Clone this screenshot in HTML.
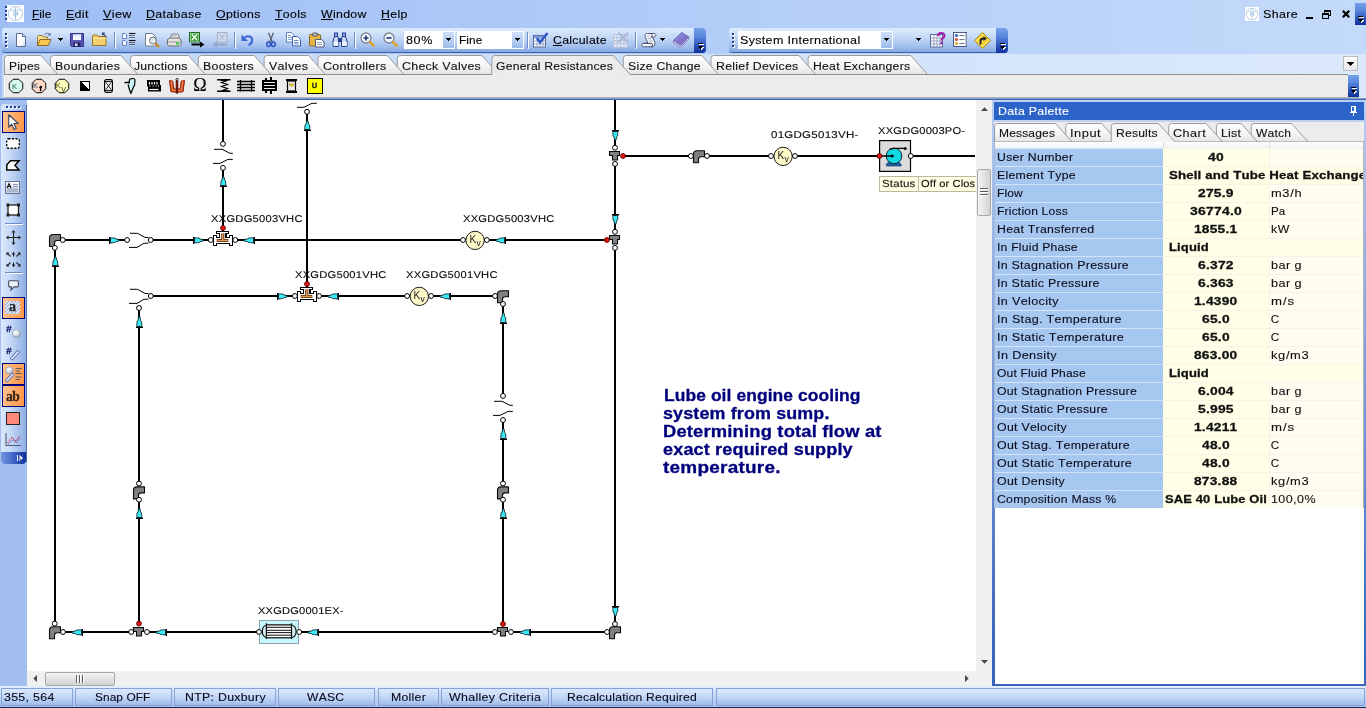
<!DOCTYPE html>
<html lang="en"><head><meta charset="utf-8"><title>Pipe Flow - Data Palette</title>
<style>
html,body{margin:0;padding:0}
body{width:1366px;height:708px;overflow:hidden;position:relative;background:#a3bff0;font-family:"Liberation Sans",sans-serif;font-size:12px}
.a{position:absolute;display:block}
.t{position:absolute;white-space:pre;font-kerning:none;transform-origin:0 0;-webkit-text-stroke:.12px currentColor;font-family:"Liberation Sans",sans-serif}
u{text-decoration:underline;text-underline-offset:1px}
svg{overflow:visible}
#app{position:absolute;left:0;top:0;width:1366px;height:708px;overflow:hidden;will-change:transform}
</style></head>
<body>
<div id="app">
<div class="a" style="left:0;top:0;width:1366px;height:54px;background:linear-gradient(90deg,#9ebef5,#c4dafa)"></div><i class="a" style="left:6px;top:7px;width:2px;height:2px;background:#fff"></i><i class="a" style="left:5px;top:6px;width:2px;height:2px;background:#27418f"></i><i class="a" style="left:6px;top:11px;width:2px;height:2px;background:#fff"></i><i class="a" style="left:5px;top:10px;width:2px;height:2px;background:#27418f"></i><i class="a" style="left:6px;top:15px;width:2px;height:2px;background:#fff"></i><i class="a" style="left:5px;top:14px;width:2px;height:2px;background:#27418f"></i><i class="a" style="left:6px;top:19px;width:2px;height:2px;background:#fff"></i><i class="a" style="left:5px;top:18px;width:2px;height:2px;background:#27418f"></i><svg class="a" style="left:7px;top:5px" width="17" height="17" viewBox="0 0 17 17"><rect width="17" height="17" fill="#fff"/><circle cx="8.5" cy="8.5" r="7" fill="none" stroke="#a9c6e4" stroke-width="1"/><path d="M8.5 2.5v12M4 6.2c0-2 3-2 3 0v5M13 6.2c0-2-3-2-3 0v5M9 8.5h3" fill="none" stroke="#9dbfe0" stroke-width="1"/></svg><span class="t" style="left:31.84px;top:6.00px;font-size:11.7px;line-height:15px;color:#000;letter-spacing:0.067px;transform:scaleX(1.0143);"><u>F</u>ile</span><span class="t" style="left:66.31px;top:6.00px;font-size:11.7px;line-height:15px;color:#000;letter-spacing:0.303px;transform:scaleX(1.0625);"><u>E</u>dit</span><span class="t" style="left:103.31px;top:6.00px;font-size:11.7px;line-height:15px;color:#000;letter-spacing:0.415px;transform:scaleX(1.0676);"><u>V</u>iew</span><span class="t" style="left:146.31px;top:6.00px;font-size:11.7px;line-height:15px;color:#000;letter-spacing:0.319px;transform:scaleX(1.0593);"><u>D</u>atabase</span><span class="t" style="left:216.31px;top:6.00px;font-size:11.7px;line-height:15px;color:#000;letter-spacing:0.284px;transform:scaleX(1.0565);"><u>O</u>ptions</span><span class="t" style="left:275.31px;top:6.00px;font-size:11.7px;line-height:15px;color:#000;letter-spacing:0.289px;transform:scaleX(1.0545);"><u>T</u>ools</span><span class="t" style="left:321.32px;top:6.00px;font-size:11.7px;line-height:15px;color:#000;letter-spacing:0.319px;transform:scaleX(1.0508);"><u>W</u>indow</span><span class="t" style="left:381.31px;top:6.00px;font-size:11.7px;line-height:15px;color:#000;letter-spacing:0.318px;transform:scaleX(1.0541);"><u>H</u>elp</span><svg class="a" style="left:1245px;top:7px" width="14" height="14" viewBox="0 0 17 17"><rect width="17" height="17" fill="#fff"/><circle cx="8.5" cy="8.5" r="7" fill="none" stroke="#a9c6e4" stroke-width="1"/><path d="M8.5 2.5v12M4 6.2c0-2 3-2 3 0v5M13 6.2c0-2-3-2-3 0v5M9 8.5h3" fill="none" stroke="#9dbfe0" stroke-width="1"/></svg><span class="t" style="left:1263.31px;top:6.00px;font-size:11.7px;line-height:15px;color:#000;letter-spacing:0.370px;transform:scaleX(1.0643);">Share</span><i class="a" style="left:1306px;top:17px;width:7px;height:2px;background:#000"></i><svg class="a" style="left:1322px;top:10px" width="10" height="10" shape-rendering="crispEdges"><rect x="2.5" y="0.5" width="6" height="5" fill="none" stroke="#000"/><rect x="2" y="0" width="7" height="2" fill="#000"/><rect x="0.5" y="3.5" width="6" height="5" fill="#b9d2f8" stroke="#000"/><rect x="0" y="3" width="7" height="2" fill="#000"/></svg><svg class="a" style="left:1342px;top:10px" width="8" height="8"><path d="M.8 .8l6.400 6.400M7.200 .8l-6.400 6.400" stroke="#000" stroke-width="2.300"/></svg><div class="a" style="left:1355px;top:3px;width:11px;height:22px;border-radius:0;background:linear-gradient(#74a0ea,#5a86de 35%,#2c55bc 70%,#10309a)"><svg class="a" style="right:1px;bottom:1px" width="7" height="8" shape-rendering="crispEdges"><rect x="1" y="1" width="5" height="1" fill="#fff"/><polygon points="1,4 6,4 3.500,7" fill="#fff"/><rect x="0" y="0" width="5" height="1" fill="#000"/><polygon points="0,3 5,3 2.500,6" fill="#000"/></svg></div>
<div class="a" style="left:2px;top:28px;width:704px;height:24px;border-radius:3px 4px 4px 3px;background:linear-gradient(#dcebfd,#c7dbf8 35%,#a5c1ee 75%,#84a8e2);border-bottom:1px solid #3d62a8;"></div><i class="a" style="left:6px;top:34px;width:2px;height:2px;background:#fff"></i><i class="a" style="left:5px;top:33px;width:2px;height:2px;background:#27418f"></i><i class="a" style="left:6px;top:38px;width:2px;height:2px;background:#fff"></i><i class="a" style="left:5px;top:37px;width:2px;height:2px;background:#27418f"></i><i class="a" style="left:6px;top:42px;width:2px;height:2px;background:#fff"></i><i class="a" style="left:5px;top:41px;width:2px;height:2px;background:#27418f"></i><i class="a" style="left:6px;top:46px;width:2px;height:2px;background:#fff"></i><i class="a" style="left:5px;top:45px;width:2px;height:2px;background:#27418f"></i><svg class="a" style="left:13px;top:32px" width="16" height="16" viewBox="0 0 16 16"><defs><linearGradient id="gpg" x1="0" y1="0" x2="1" y2="1"><stop offset="0" stop-color="#fff"/><stop offset=".6" stop-color="#fff"/><stop offset="1" stop-color="#c8d4ec"/></linearGradient></defs><path d="M3.5 1.5h6l3 3v10h-9z" fill="url(#gpg)" stroke="#5a6d98"/><path d="M9.5 1.5v3h3" fill="#dfe7f7" stroke="#5a6d98"/></svg><svg class="a" style="left:36px;top:32px" width="16" height="16" viewBox="0 0 16 16"><path d="M1.5 13.5v-9l1-1h4l1 1.5h4v2" fill="#f7dc8c" stroke="#9c7a2c"/><path d="M1.5 13.5l2.5-6h11l-2.8 6z" fill="#f6c850" stroke="#8a6a20"/><path d="M8.5 2.5c2-2 4.500-1.500 5.500 .5" fill="none" stroke="#5670a8"/><path d="M14.800 .8l-.3 3.200-2.800-1z" fill="#5670a8"/></svg><svg class="a" style="left:69px;top:32px" width="16" height="16" viewBox="0 0 16 16"><path d="M1.500 1.500h13v13h-12l-1-1z" fill="#5a57b8" stroke="#34318a"/><rect x="4" y="2" width="8" height="6" fill="#f4f6ff"/><rect x="4" y="2" width="8" height="1.500" fill="#c9cff0"/><rect x="4.500" y="10.500" width="7" height="4" fill="#23215c"/><rect x="6" y="11.500" width="2.500" height="2.500" fill="#e8e8f8"/></svg><svg class="a" style="left:92px;top:32px" width="16" height="16" viewBox="0 0 16 16"><path d="M.5 13.500v-9.500l1-1h4l1 1.500h7.500v9z" fill="#f4cf6c" stroke="#94742a"/><path d="M1 6.500h13" stroke="#fbe9ac"/><path d="M10.500 3.500v-2.500h2.5M10.700 1.200l3.600 3.600" fill="none" stroke="#3a4a78" stroke-width="1.100"/></svg><svg class="a" style="left:121px;top:32px" width="16" height="16" viewBox="0 0 16 16"><path d="M1.500 1.500h2.500l1.500 1.500v3.500h-4zM1.500 8.500h2.500l1.500 1.500v3.500h-4z" fill="#fff" stroke="#5f86cc"/><path d="M8 1.500h6.500" stroke="#111" stroke-width="1.100"/><path d="M8 3.500h6M8 5.500h6" stroke="#4a5058" stroke-width=".8"/><path d="M8 8.500h6.500" stroke="#111" stroke-width="1.100"/><path d="M8 10.500h6M8 12.500h6" stroke="#4a5058" stroke-width=".8"/></svg><svg class="a" style="left:144px;top:32px" width="16" height="16" viewBox="0 0 16 16"><path d="M1.500 1.500h7l3 3v9.500h-10z" fill="#fff" stroke="#707a90"/><circle cx="9" cy="8.500" r="3.500" fill="#dce8f4" fill-opacity=".85" stroke="#6a6a6a"/><path d="M11.500 11.500l3 3" stroke="#d08a28" stroke-width="2.400" stroke-linecap="round"/></svg><svg class="a" style="left:166px;top:32px" width="16" height="16" viewBox="0 0 16 16"><path d="M4 6.500l2-4.500h6l1.500 4.500z" fill="#fff" stroke="#7a7a7a"/><path d="M1.500 7.500l2.500-1.500h9l2 1.500v5l-1.500 1.500h-10.500l-1.500-1.500z" fill="#e4e4e4" stroke="#6a6a6a"/><path d="M2 10h12.500" stroke="#9a9a9a"/><rect x="10" y="10.500" width="3" height="2" fill="#34c840"/><path d="M6 3.500h5M5.500 5h6" stroke="#aaa" stroke-width=".8"/></svg><svg class="a" style="left:189px;top:32px" width="16" height="16" viewBox="0 0 16 16"><rect x=".5" y=".5" width="10" height="9.500" fill="#e9f4e4" stroke="#1d6b22"/><rect x="1.500" y="1.500" width="8" height="7.500" fill="#3c9a3c"/><path d="M3 2.500l5 5.500M8 2.500l-5 5.500" stroke="#e8ffe8" stroke-width="1.600"/><path d="M2.500 12.500h10" stroke="#000" stroke-width="2"/><path d="M11 9.500l4.500 3-4.500 3z" fill="#000"/></svg><svg class="a" style="left:212px;top:32px" width="16" height="16" viewBox="0 0 16 16"><rect x="5.500" y=".5" width="9.500" height="9.500" fill="#d3dcec" stroke="#a3b0c8"/><path d="M7.500 2.500l5 5.500M12.500 2.500l-5 5.500" stroke="#b4c0d6" stroke-width="1.400"/><path d="M4 12.500h11" stroke="#93a6c8" stroke-width="2"/><path d="M5 9.500l-4.500 3 4.500 3z" fill="#93a6c8"/></svg><svg class="a" style="left:240px;top:32px" width="16" height="16" viewBox="0 0 16 16"><path d="M3.500 6.500c3.500-3.800 9.500-2.500 8.500 2.800-.4 2-1.800 3.200-3.500 3.800" fill="none" stroke="#3b66d6" stroke-width="2.100"/><path d="M1.500 2.500v6.500h6.500z" fill="#3b66d6"/></svg><svg class="a" style="left:263px;top:32px" width="16" height="16" viewBox="0 0 16 16"><path d="M5.500 .8l3.800 9.200M10.500 .8l-3.800 9.200" stroke="#5c6474" stroke-width="1.400"/><ellipse cx="5.600" cy="12.300" rx="1.900" ry="2.300" fill="none" stroke="#2c50c8" stroke-width="1.500"/><ellipse cx="10.400" cy="12.300" rx="1.900" ry="2.300" fill="none" stroke="#2c50c8" stroke-width="1.500"/></svg><svg class="a" style="left:286px;top:32px" width="16" height="16" viewBox="0 0 16 16"><path d="M.5 .5h5l2.500 2.500v7h-7.500z" fill="#fff" stroke="#5f86cc"/><path d="M2 3.500h3M2 5.500h4.500M2 7.500h4.500" stroke="#7b9bd6" stroke-width=".9"/><path d="M6.500 4.500h5l3 3v6.500h-8z" fill="#fff" stroke="#3c62b6"/><path d="M8 8.500h4.500M8 10.500h4.500M8 12h4.500" stroke="#5a7ecb" stroke-width=".9"/></svg><svg class="a" style="left:309px;top:32px" width="16" height="16" viewBox="0 0 16 16"><rect x=".5" y="2.500" width="11" height="11.500" rx="1" fill="#e6b548" stroke="#8a6414"/><rect x="3.500" y="1" width="5" height="3" rx="1" fill="#b9bdc8" stroke="#555"/><path d="M6.500 7.500h6l2.500 2.500v5h-8.500z" fill="#fff" stroke="#50597a"/><path d="M8 10.500h5M8 12.500h5" stroke="#8a93ad" stroke-width=".9"/></svg><svg class="a" style="left:332px;top:32px" width="16" height="16" viewBox="0 0 16 16"><path d="M1 14.500v-5.500l1.500-4.500h3.500l.5 4.500v5.500zM9.500 14.500v-5.500l.5-4.500h3.500l1.500 4.500v5.500z" fill="#cfdcf4" stroke="#24408c"/><rect x="2.500" y="1" width="3" height="3.500" fill="#8aa5dc" stroke="#24408c"/><rect x="10.500" y="1" width="3" height="3.500" fill="#8aa5dc" stroke="#24408c"/><rect x="6.500" y="6" width="3" height="4" fill="#24408c"/><rect x="1.500" y="10" width="5" height="4" fill="#fff" opacity=".7"/><rect x="10" y="10" width="5" height="4" fill="#fff" opacity=".7"/></svg><svg class="a" style="left:360px;top:32px" width="16" height="16" viewBox="0 0 16 16"><circle cx="6" cy="6" r="5" fill="#f2f6fc" stroke="#7b8594" stroke-width="1.300"/><path d="M3.500 6h5M6 3.500v5" stroke="#223a78" stroke-width="1.700"/><path d="M10.200 10.200l3.300 3.300" stroke="#d6a63c" stroke-width="3" stroke-linecap="round"/></svg><svg class="a" style="left:383px;top:32px" width="16" height="16" viewBox="0 0 16 16"><circle cx="6" cy="6" r="5" fill="#f2f6fc" stroke="#7b8594" stroke-width="1.300"/><path d="M3.500 6h5" stroke="#223a78" stroke-width="1.700"/><path d="M10.200 10.200l3.300 3.300" stroke="#d6a63c" stroke-width="3" stroke-linecap="round"/></svg><svg class="a" style="left:533px;top:32px" width="16" height="16" viewBox="0 0 16 16"><rect x=".5" y="3.500" width="12" height="11.500" fill="#fff" stroke="#5a6c9c"/><rect x="1" y="4" width="11" height="2.500" fill="#7f9fdc"/><path d="M1 9h11M1 12h11M4 6.500v8M7 6.500v8M10 6.500v8" stroke="#8e9cc0" stroke-width=".9"/><path d="M4 6l3 4.500 7.500-9.500" fill="none" stroke="#2b56c8" stroke-width="2.400"/></svg><svg class="a" style="left:613px;top:32px" width="16" height="16" viewBox="0 0 16 16"><rect x=".5" y="2.500" width="14" height="13" fill="#dfe7f5" stroke="#b3c1dc"/><path d="M1 5.500h13M1 8.500h13M1 11.500h13M4 3v12M7.500 3v12M11 3v12" stroke="#b6c4de" stroke-width="1.100"/><path d="M5.500 .8l9.500 9.500M15 .8l-9.500 9.500" stroke="#aab8d4" stroke-width="2"/></svg><svg class="a" style="left:641px;top:32px" width="16" height="16" viewBox="0 0 16 16"><path d="M4 3.800C4 1.800 5 1.500 6.200 1.500H13.200C15.400 1.500 15.400 5 13.200 5H11.600C12.400 7.800 14.200 9.800 14 12.300C13.800 14.300 12.200 14.800 10.500 14.800H2.600C.4 14.800 .4 11.300 2.600 11.300H6.600C6.800 8.800 4 6.500 4 3.800Z" fill="#f6f7fd" stroke="#465070" stroke-width=".95"/><path d="M2.600 11.300H10.200C12 11.300 12 14.800 10.200 14.800" fill="none" stroke="#38425e" stroke-width="1"/><path d="M11.600 5H9.800C11.600 4.800 11.800 1.700 9.800 1.500" fill="none" stroke="#38425e" stroke-width=".9"/><path d="M6.300 4H8.800M6.800 6.500H10M8 9H11.400" stroke="#9aa4c4" stroke-width=".9"/></svg><svg class="a" style="left:673px;top:32px" width="16" height="16" viewBox="0 0 16 16"><defs><linearGradient id="gbk" x1="0" y1="0" x2="1" y2="1"><stop offset="0" stop-color="#9c92e0"/><stop offset="1" stop-color="#6a5fc0"/></linearGradient></defs><path d="M.5 8.500v2.300l7.300 4.700 8-8.500v-2.300" fill="#f2f2fa" stroke="#8a82c4"/><path d="M.5 8.500l8.300-8 7 4.500-8 8.500z" fill="url(#gbk)" stroke="#6a62b0"/><path d="M1.500 10.300l6.300 4 7.500-8" fill="none" stroke="#b8b4dc" stroke-width=".8"/></svg><svg class="a" style="left:58px;top:38px" width="5" height="3" shape-rendering="crispEdges"><polygon points="0,0 5,0 2.5,3" fill="#000"/></svg><i class="a" style="left:114px;top:32px;width:1px;height:16px;background:#6a8ccb"></i><i class="a" style="left:115px;top:33px;width:1px;height:16px;background:#fff"></i><i class="a" style="left:234px;top:32px;width:1px;height:16px;background:#6a8ccb"></i><i class="a" style="left:235px;top:33px;width:1px;height:16px;background:#fff"></i><i class="a" style="left:354px;top:32px;width:1px;height:16px;background:#6a8ccb"></i><i class="a" style="left:355px;top:33px;width:1px;height:16px;background:#fff"></i><i class="a" style="left:527px;top:32px;width:1px;height:16px;background:#6a8ccb"></i><i class="a" style="left:528px;top:33px;width:1px;height:16px;background:#fff"></i><i class="a" style="left:635px;top:32px;width:1px;height:16px;background:#6a8ccb"></i><i class="a" style="left:636px;top:33px;width:1px;height:16px;background:#fff"></i><div class="a" style="left:404px;top:31px;width:51px;height:18px;background:#fff"></div><div class="a" style="left:443px;top:32px;width:11px;height:16px;background:linear-gradient(#cfe0fa,#9dbcec)"></div><svg class="a" style="left:446px;top:38px" width="5" height="3" shape-rendering="crispEdges"><polygon points="0,0 5,0 2.5,3" fill="#000"/></svg><span class="t" style="left:405.70px;top:32.00px;font-size:11.7px;line-height:15px;color:#000;letter-spacing:0.588px;transform:scaleX(1.0695);">80%</span><div class="a" style="left:457px;top:31px;width:67px;height:18px;background:#fff"></div><div class="a" style="left:512px;top:32px;width:11px;height:16px;background:linear-gradient(#cfe0fa,#9dbcec)"></div><svg class="a" style="left:515px;top:38px" width="5" height="3" shape-rendering="crispEdges"><polygon points="0,0 5,0 2.5,3" fill="#000"/></svg><span class="t" style="left:458.84px;top:32.00px;font-size:11.7px;line-height:15px;color:#000;letter-spacing:0.081px;transform:scaleX(1.0141);">Fine</span><span class="t" style="left:552.81px;top:32.00px;font-size:11.7px;line-height:15px;color:#000;letter-spacing:0.253px;transform:scaleX(1.0551);"><u>C</u>alculate</span><svg class="a" style="left:660px;top:38px" width="5" height="3" shape-rendering="crispEdges"><polygon points="0,0 5,0 2.5,3" fill="#000"/></svg><div class="a" style="left:694px;top:28px;width:12px;height:25px;border-radius:0 4px 4px 0;background:linear-gradient(#74a0ea,#5a86de 35%,#2c55bc 70%,#10309a)"><svg class="a" style="right:1px;bottom:2px" width="7" height="8" shape-rendering="crispEdges"><rect x="1" y="1" width="5" height="1" fill="#fff"/><polygon points="1,4 6,4 3.500,7" fill="#fff"/><rect x="0" y="0" width="5" height="1" fill="#000"/><polygon points="0,3 5,3 2.500,6" fill="#000"/></svg></div>
<div class="a" style="left:729px;top:28px;width:279px;height:24px;border-radius:3px 4px 4px 3px;background:linear-gradient(#dcebfd,#c7dbf8 35%,#a5c1ee 75%,#84a8e2);border-bottom:1px solid #3d62a8;"></div><i class="a" style="left:733px;top:34px;width:2px;height:2px;background:#fff"></i><i class="a" style="left:732px;top:33px;width:2px;height:2px;background:#27418f"></i><i class="a" style="left:733px;top:38px;width:2px;height:2px;background:#fff"></i><i class="a" style="left:732px;top:37px;width:2px;height:2px;background:#27418f"></i><i class="a" style="left:733px;top:42px;width:2px;height:2px;background:#fff"></i><i class="a" style="left:732px;top:41px;width:2px;height:2px;background:#27418f"></i><i class="a" style="left:733px;top:46px;width:2px;height:2px;background:#fff"></i><i class="a" style="left:732px;top:45px;width:2px;height:2px;background:#27418f"></i><div class="a" style="left:738px;top:31px;width:155px;height:18px;background:#fff"></div><div class="a" style="left:881px;top:32px;width:11px;height:16px;background:linear-gradient(#cfe0fa,#9dbcec)"></div><svg class="a" style="left:884px;top:38px" width="5" height="3" shape-rendering="crispEdges"><polygon points="0,0 5,0 2.5,3" fill="#000"/></svg><span class="t" style="left:739.80px;top:32.00px;font-size:11.7px;line-height:15px;color:#000;letter-spacing:0.300px;transform:scaleX(1.0708);">System International</span><svg class="a" style="left:916px;top:38px" width="5" height="3" shape-rendering="crispEdges"><polygon points="0,0 5,0 2.5,3" fill="#000"/></svg><svg class="a" style="left:929.5px;top:32px" width="16" height="16" viewBox="0 0 16 16"><rect x=".5" y="2.500" width="12" height="12.500" fill="#fff" stroke="#5a6c9c"/><path d="M1 6h11M1 9h11M1 12h11M4 3v12M7 3v12M10 3v12" stroke="#8e9cc0" stroke-width=".9"/><path d="M8 4c0-4 7-4 6.500 0-.3 2-3 2-3 4.500" fill="none" stroke="#a020b0" stroke-width="2.200"/><circle cx="11.500" cy="11" r="1.300" fill="#a020b0"/></svg><svg class="a" style="left:953px;top:32px" width="16" height="16" viewBox="0 0 16 16"><rect x=".5" y=".5" width="13" height="14" fill="#fdfdfd" stroke="#4a5a8a"/><rect x="12" y="1" width="1.500" height="13" fill="#c4ccdf"/><circle cx="3.500" cy="3.500" r="1.600" fill="#3860d8"/><circle cx="3.500" cy="7.500" r="1.600" fill="#d84a30"/><circle cx="3.500" cy="11.500" r="1.600" fill="#e0b020"/><path d="M6.500 3.500h5M6.500 7.500h5M6.500 11.500h5" stroke="#6a7a9a" stroke-width="1"/></svg><svg class="a" style="left:974px;top:31.5px" width="17" height="17" viewBox="0 0 17 17"><path d="M8.500 .5l8 8-8 8-8-8z" fill="#f6d43c" stroke="#b08a10"/><path d="M8.500 2.500l6 6-6 6-6-6z" fill="none" stroke="#fbe98a" stroke-width=".8"/><path d="M6.500 12.500v-3.500c0-2 1.500-2.500 3.500-2.500" fill="none" stroke="#222" stroke-width="1.800"/><path d="M9.500 4l3.500 2.500-3.500 2.500z" fill="#222"/></svg><div class="a" style="left:996px;top:28px;width:12px;height:25px;border-radius:0 4px 4px 0;background:linear-gradient(#74a0ea,#5a86de 35%,#2c55bc 70%,#10309a)"><svg class="a" style="right:1px;bottom:2px" width="7" height="8" shape-rendering="crispEdges"><rect x="1" y="1" width="5" height="1" fill="#fff"/><polygon points="1,4 6,4 3.500,7" fill="#fff"/><rect x="0" y="0" width="5" height="1" fill="#000"/><polygon points="0,3 5,3 2.500,6" fill="#000"/></svg></div>
<div class="a" style="left:0;top:53px;width:1366px;height:47px;background:linear-gradient(90deg,#9ebef5,#c4dafa)"></div><div class="a" style="left:2px;top:54px;width:1364px;height:45px;border-radius:3px 0 0 3px;background:linear-gradient(90deg,#c3d9f9,#dce9fb)"></div><div class="a" style="left:4px;top:74px;width:1344px;height:23px;background:#ececec;border-left:1px solid #fff"></div><svg class="a" style="left:0;top:54px" width="1366" height="21" viewBox="0 54 1366 21"><defs><linearGradient id="tg1" x1="0" y1="0" x2="0" y2="1"><stop offset="0" stop-color="#fff"/><stop offset=".5" stop-color="#f6f6f6"/><stop offset="1" stop-color="#e4e4e4"/></linearGradient></defs><path d="M808.1 74.5V58.5Q808.1 55.5 811.1 55.5H910.8L927.6 74.5Z" fill="url(#tg1)"/><path d="M808.1 74.5V58.5Q808.1 55.5 811.1 55.5H910.8L927.6 74.5" fill="none" stroke="#9a9a9a" stroke-width="1"/><path d="M711 74.5V58.5Q711 55.5 714 55.5H798.9L815.7 74.5Z" fill="url(#tg1)"/><path d="M711 74.5V58.5Q711 55.5 714 55.5H798.9L815.7 74.5" fill="none" stroke="#9a9a9a" stroke-width="1"/><path d="M623.3 74.5V58.5Q623.3 55.5 626.3 55.5H701.8L718.6 74.5Z" fill="url(#tg1)"/><path d="M623.3 74.5V58.5Q623.3 55.5 626.3 55.5H701.8L718.6 74.5" fill="none" stroke="#9a9a9a" stroke-width="1"/><path d="M397.3 74.5V58.5Q397.3 55.5 400.3 55.5H481.9L498.7 74.5Z" fill="url(#tg1)"/><path d="M397.3 74.5V58.5Q397.3 55.5 400.3 55.5H481.9L498.7 74.5" fill="none" stroke="#9a9a9a" stroke-width="1"/><path d="M318 74.5V58.5Q318 55.5 321 55.5H387.2L404 74.5Z" fill="url(#tg1)"/><path d="M318 74.5V58.5Q318 55.5 321 55.5H387.2L404 74.5" fill="none" stroke="#9a9a9a" stroke-width="1"/><path d="M264.1 74.5V58.5Q264.1 55.5 267.1 55.5H308.6L325.4 74.5Z" fill="url(#tg1)"/><path d="M264.1 74.5V58.5Q264.1 55.5 267.1 55.5H308.6L325.4 74.5" fill="none" stroke="#9a9a9a" stroke-width="1"/><path d="M198.3 74.5V58.5Q198.3 55.5 201.3 55.5H254.2L271 74.5Z" fill="url(#tg1)"/><path d="M198.3 74.5V58.5Q198.3 55.5 201.3 55.5H254.2L271 74.5" fill="none" stroke="#9a9a9a" stroke-width="1"/><path d="M130.5 74.5V58.5Q130.5 55.5 133.5 55.5H188.5L205.3 74.5Z" fill="url(#tg1)"/><path d="M130.5 74.5V58.5Q130.5 55.5 133.5 55.5H188.5L205.3 74.5" fill="none" stroke="#9a9a9a" stroke-width="1"/><path d="M50.5 74.5V58.5Q50.5 55.5 53.5 55.5H121L137.8 74.5Z" fill="url(#tg1)"/><path d="M50.5 74.5V58.5Q50.5 55.5 53.5 55.5H121L137.8 74.5" fill="none" stroke="#9a9a9a" stroke-width="1"/><path d="M4.5 74.5V58.5Q4.5 55.5 7.5 55.5H41L57.8 74.5Z" fill="url(#tg1)"/><path d="M4.5 74.5V58.5Q4.5 55.5 7.5 55.5H41L57.8 74.5" fill="none" stroke="#9a9a9a" stroke-width="1"/><path d="M491.8 74.5V58.5Q491.8 55.5 494.8 55.5H613.3L630.1 74.5Z" fill="#ececec"/><path d="M491.8 74.5V58.5Q491.8 55.5 494.8 55.5H613.3L630.1 74.5" fill="none" stroke="#9a9a9a" stroke-width="1"/><path d="M4 74.5H491.8M630.1 74.5H1348" stroke="#8e8e8e" stroke-width="1"/></svg><span class="t" style="left:8.83px;top:58.00px;font-size:11.7px;line-height:15px;color:#111;letter-spacing:0.169px;transform:scaleX(1.0305);">Pipes</span><span class="t" style="left:54.82px;top:58.00px;font-size:11.7px;line-height:15px;color:#111;letter-spacing:0.269px;transform:scaleX(1.0538);">Boundaries</span><span class="t" style="left:134.32px;top:58.00px;font-size:11.7px;line-height:15px;color:#111;letter-spacing:0.210px;transform:scaleX(1.0447);">Junctions</span><span class="t" style="left:202.71px;top:58.00px;font-size:11.7px;line-height:15px;color:#111;letter-spacing:0.278px;transform:scaleX(1.0561);">Boosters</span><span class="t" style="left:268.71px;top:58.00px;font-size:11.7px;line-height:15px;color:#111;letter-spacing:0.323px;transform:scaleX(1.0619);">Valves</span><span class="t" style="left:323.11px;top:58.00px;font-size:11.7px;line-height:15px;color:#111;letter-spacing:0.282px;transform:scaleX(1.0666);">Controllers</span><span class="t" style="left:401.81px;top:58.00px;font-size:11.7px;line-height:15px;color:#111;letter-spacing:0.280px;transform:scaleX(1.0567);">Check Valves</span><span class="t" style="left:495.62px;top:58.00px;font-size:11.7px;line-height:15px;color:#111;letter-spacing:0.197px;transform:scaleX(1.0421);">General Resistances</span><span class="t" style="left:627.92px;top:58.00px;font-size:11.7px;line-height:15px;color:#111;letter-spacing:0.243px;transform:scaleX(1.0474);">Size Change</span><span class="t" style="left:715.61px;top:58.00px;font-size:11.7px;line-height:15px;color:#111;letter-spacing:0.246px;transform:scaleX(1.0562);">Relief Devices</span><span class="t" style="left:812.72px;top:58.00px;font-size:11.7px;line-height:15px;color:#111;letter-spacing:0.226px;transform:scaleX(1.0457);">Heat Exchangers</span><div class="a" style="left:4px;top:97px;width:1355px;height:1px;background:#b2b2b6"></div><div class="a" style="left:0;top:98px;width:1366px;height:1px;background:#7d9cd4"></div><div class="a" style="left:0;top:99px;width:1366px;height:1px;background:#4068b0"></div><div class="a" style="left:1343px;top:56px;width:15px;height:15px;background:linear-gradient(#fff,#e8e8e8);border:1px solid #bdbdbd;box-sizing:border-box"></div><svg class="a" style="left:1347px;top:62px" width="7" height="4" shape-rendering="crispEdges"><polygon points="0,0 7,0 3.5,4" fill="#000"/></svg><div class="a" style="left:1348px;top:75px;width:11px;height:22px;border-radius:0;background:linear-gradient(#74a0ea,#5a86de 35%,#2c55bc 70%,#10309a)"><svg class="a" style="right:1px;bottom:2px" width="7" height="8" shape-rendering="crispEdges"><rect x="1" y="1" width="5" height="1" fill="#fff"/><polygon points="1,4 6,4 3.500,7" fill="#fff"/><rect x="0" y="0" width="5" height="1" fill="#000"/><polygon points="0,3 5,3 2.500,6" fill="#000"/></svg></div>
<svg class="a" style="left:8px;top:78px" width="16" height="16" viewBox="0 0 16 16" ><polygon points="14.74,10.79 10.79,14.74 5.21,14.74 1.26,10.79 1.26,5.21 5.21,1.26 10.79,1.26 14.74,5.21" fill="#d6fbee" stroke="#000" stroke-width="1" stroke-linejoin="round"/></svg><span class="t" style="left:12.05px;top:81.00px;font-size:7.5px;line-height:11px;color:#3c7a68;">K</span><svg class="a" style="left:31px;top:78px" width="16" height="16" viewBox="0 0 16 16" ><polygon points="14.74,10.79 10.79,14.74 5.21,14.74 1.26,10.79 1.26,5.21 5.21,1.26 10.79,1.26 14.74,5.21" fill="#ffd9c6" stroke="#000" stroke-width="1" stroke-linejoin="round"/></svg><span class="t" style="left:33.05px;top:80.00px;font-size:7.5px;line-height:11px;color:#3c5884;">K</span><span class="t" style="left:39.35px;top:83.00px;font-size:8px;line-height:11px;color:#000;font-weight:bold;-webkit-text-stroke:.3px currentColor;">f</span><svg class="a" style="left:54px;top:78px" width="16" height="16" viewBox="0 0 16 16" ><polygon points="14.74,10.79 10.79,14.74 5.21,14.74 1.26,10.79 1.26,5.21 5.21,1.26 10.79,1.26 14.74,5.21" fill="#fbfbbe" stroke="#000" stroke-width="1" stroke-linejoin="round"/></svg><span class="t" style="left:55.75px;top:80.00px;font-size:7.5px;line-height:11px;color:#70702a;">K</span><span class="t" style="left:61.35px;top:85.00px;font-size:7px;line-height:9px;color:#55551a;">V</span><svg class="a" style="left:80px;top:81px" width="10" height="10" viewBox="0 0 10 10" shape-rendering="crispEdges"><rect x=".5" y=".5" width="9" height="9" fill="#fff" stroke="#000"/><path d="M0 0v10h10z" fill="#000"/></svg><svg class="a" style="left:104px;top:79px" width="9" height="14" viewBox="0 0 9 14" ><rect x=".6" y=".6" width="7.800" height="12.800" rx="1.800" fill="#fff" stroke="#000" stroke-width="1.200"/><path d="M1 2.600h7M1 11.400h7" stroke="#000" stroke-width="1"/><path d="M2 3.500l5 7M7 3.500l-5 7" stroke="#000" stroke-width=".9"/></svg><svg class="a" style="left:124px;top:78px" width="12" height="16" viewBox="0 0 12 16" ><path d="M5.800 1.200C7.500 .2 10.800 .2 11 1.800L10.600 7 8.200 12 6.900 15.500 5.600 12 4.200 7z" fill="#c8f1f8" stroke="#000" stroke-width="1.200" stroke-linejoin="round"/><path d="M.6 4.600H6" stroke="#000" stroke-width="1.600"/><path d="M2 5.800H5.500" stroke="#c8f1f8" stroke-width="1"/></svg><svg class="a" style="left:147px;top:80px" width="14" height="12" viewBox="0 0 14 12" ><path d="M0 0h13v5h1v6.500h-13v-5h-1z" fill="#000"/><path d="M2.500 2v2.500M5 2v2.500M7.500 2v2.500M10 2v2.500" stroke="#fff" stroke-width="1.200"/><path d="M2.500 6h1M5.500 6h1M8.500 6h1M11 6h1" stroke="#fff" stroke-width="1"/><path d="M2.500 9.500h9" stroke="#fff" stroke-width="1.200"/></svg><svg class="a" style="left:169px;top:78px" width="16" height="16" viewBox="0 0 16 16" ><path d="M2.300 2.500C1.800 5 3.200 7 3.300 12.500H12.700C12.800 7 14.200 5 13.700 2.500" fill="none" stroke="#7a1c0c" stroke-width="4.200" stroke-linejoin="round"/><path d="M2.300 2.500C1.800 5 3.200 7 3.300 12.500H12.700C12.800 7 14.200 5 13.700 2.500" fill="none" stroke="#cc3c20" stroke-width="2.800" stroke-linejoin="round"/><path d="M2.400 3C2 5.500 3.300 7.500 3.400 12.400H12.600C12.700 7.500 14 5.500 13.600 3" fill="none" stroke="#f0a040" stroke-width="1"/><path d="M8 2.500v13" stroke="#7a1c0c" stroke-width="2.600"/><path d="M8 3v12" stroke="#cc3c20" stroke-width="1.300"/><path d="M8 .5v15" stroke="#200" stroke-width=".9"/><circle cx="8" cy="1.600" r="1.100" fill="#ececec" stroke="#200" stroke-width=".8"/></svg><span class="t" style="left:193.35px;top:74.00px;font-size:18px;line-height:22px;color:#000;font-family:'Liberation Serif';">&#937;</span><svg class="a" style="left:217px;top:79px" width="14" height="13" viewBox="0 0 14 13" ><path d="M0 .8h13.500M0 12.200h13.500" stroke="#000" stroke-width="1.500"/><path d="M3.500 1.500h7l-6 2 6 2-6 2 6 2-6 2.200h7" fill="none" stroke="#000" stroke-width="1.150"/></svg><svg class="a" style="left:237px;top:80px" width="18" height="11" viewBox="0 0 18 11" ><path d="M0 1.500h18M0 4.500h18M0 7.500h18M0 10.500h18" stroke="#000" stroke-width="1.300"/><path d="M3.500 0v11.500M14.500 0v11.500" stroke="#000" stroke-width="1.300"/></svg><svg class="a" style="left:261px;top:77px" width="16" height="17" viewBox="0 0 16 17" shape-rendering="crispEdges"><path d="M1 4h14M1 7h14M1 10h14M1 13h14" stroke="#000" stroke-width="1.500"/><path d="M1.500 3v11M14.500 3v11" stroke="#000" stroke-width="2"/><path d="M5 1v3M10 0v4M5 13v3M10 13v4" stroke="#000" stroke-width="1.300"/></svg><svg class="a" style="left:286px;top:79px" width="11" height="14" viewBox="0 0 11 14" ><rect x="0" y="0" width="11" height="2" fill="#000"/><rect x="0" y="12" width="11" height="2" fill="#000"/><rect x="1.500" y="2" width="8" height="10" fill="#ececec" stroke="#000" stroke-width="1.200"/><path d="M3 5h5l-2.500 3z" fill="#f0d820" stroke="#a08a10" stroke-width=".6"/></svg><div class="a" style="left:307px;top:78px;width:16px;height:16px;box-sizing:border-box;border:1px solid #000;background:#ffff00"></div><span class="t" style="left:311.85px;top:80.00px;font-size:7.5px;line-height:11px;color:#222;font-weight:bold;-webkit-text-stroke:.3px currentColor;">U</span>
<div class="a" style="left:0;top:100px;width:27px;height:587px;background:#a3bff0"></div><div class="a" style="left:26px;top:105px;width:1px;height:357px;background:#4a6cb4"></div><div class="a" style="left:1px;top:104px;width:25px;height:360px;border-radius:3px 3px 4px 4px;background:linear-gradient(90deg,#dbe8fc,#c3d7f7 40%,#8eaee2)"></div><i class="a" style="left:7px;top:107px;width:2px;height:2px;background:#fff"></i><i class="a" style="left:6px;top:106px;width:2px;height:2px;background:#27418f"></i><i class="a" style="left:11px;top:107px;width:2px;height:2px;background:#fff"></i><i class="a" style="left:10px;top:106px;width:2px;height:2px;background:#27418f"></i><i class="a" style="left:15px;top:107px;width:2px;height:2px;background:#fff"></i><i class="a" style="left:14px;top:106px;width:2px;height:2px;background:#27418f"></i><i class="a" style="left:19px;top:107px;width:2px;height:2px;background:#fff"></i><i class="a" style="left:18px;top:106px;width:2px;height:2px;background:#27418f"></i><div class="a" style="left:2px;top:111px;width:23px;height:22px;box-sizing:border-box;border:1px solid #000080;background:linear-gradient(100deg,#ffc594,#ffa760 60%,#ff9544)"></div><svg class="a" style="left:8px;top:114px" width="11" height="17" viewBox="0 0 11 17" ><path d="M.75 .75v12.500l3-3 2.300 5.200 2.200-1-2.300-5h4.200z" fill="#fff" stroke="#33425e" stroke-width="1.100" stroke-linejoin="round"/></svg><svg class="a" style="left:6px;top:138px" width="14" height="11" viewBox="0 0 14 11" ><rect x=".75" y=".75" width="12.500" height="9.500" rx="1.500" fill="#fff" stroke="#000" stroke-width="1.300" stroke-dasharray="2.200 1.400"/></svg><svg class="a" style="left:6px;top:160px" width="14" height="11" viewBox="0 0 14 11" ><path d="M4.500 .75h8.500l-4 4.500 4 4.700h-12.200v-5.200z" fill="#fff" stroke="#000" stroke-width="1.500" stroke-linejoin="miter"/></svg><svg class="a" style="left:5px;top:181px" width="15" height="13" viewBox="0 0 15 13" ><defs><linearGradient id="gti" x1="0" y1="0" x2="0" y2="1"><stop offset="0" stop-color="#fff"/><stop offset="1" stop-color="#c5cfe6"/></linearGradient></defs><rect x=".5" y=".5" width="14" height="12" fill="url(#gti)" stroke="#6a7492"/><path d="M8 3.500h5M8 5.500h5M2 8h11M2 10h11" stroke="#808aa6" stroke-width=".9"/><path d="M2 7l2-4.500 2 4.500M2.800 5.500h2.400" fill="none" stroke="#111" stroke-width="1.100"/></svg><svg class="a" style="left:5.5px;top:203px" width="15" height="14" viewBox="0 0 15 14" ><rect x="2" y="2" width="10.500" height="10" fill="#fff" stroke="#222" stroke-width="1.300"/><rect x=".5" y=".5" width="3" height="3" fill="#222"/><rect x="11" y=".5" width="3" height="3" fill="#222"/><rect x=".5" y="10.500" width="3" height="3" fill="#222"/><rect x="11" y="10.500" width="3" height="3" fill="#222"/></svg><div class="a" style="left:5px;top:223px;width:17px;height:1px;background:#6a8ccb"></div><div class="a" style="left:6px;top:224px;width:17px;height:1px;background:#fff"></div><svg class="a" style="left:6px;top:229.5px" width="15" height="15" viewBox="0 0 15 15" ><path d="M7.500 1v13M1 7.500h13" stroke="#222" stroke-width="1.100"/><path d="M7.500 0l2 2.500h-4zM7.500 15l2-2.500h-4zM0 7.500l2.500-2v4zM15 7.500l-2.500-2v4z" fill="#222"/></svg><svg class="a" style="left:6px;top:251.5px" width="15" height="15" viewBox="0 0 15 15" ><path d="M7.500 0v4.500M7.500 15v-4.500M1 1l3.500 3.500M14 1l-3.500 3.500M1 14l3.500-3.500M14 14l-3.500-3.500" stroke="#222" stroke-width="1.100"/><path d="M7.500 0l1.800 2.500h-3.600zM7.500 15l1.800-2.500h-3.600zM.5 .5h3l-3 3zM14.500 .5h-3l3 3zM.5 14.500h3l-3-3zM14.500 14.500h-3l3-3z" fill="#222"/></svg><div class="a" style="left:5px;top:272px;width:17px;height:1px;background:#6a8ccb"></div><div class="a" style="left:6px;top:273px;width:17px;height:1px;background:#fff"></div><svg class="a" style="left:8px;top:280px" width="11" height="11" viewBox="0 0 11 11" ><path d="M1.500 .75h8c.6 0 .8.300 .8.800v4.500c0 .5-.3.800-.8.800h-3.500l-3 3.200.3-3.200h-1.800c-.5 0-.8-.3-.8-.8v-4.500c0-.5.300-.8.800-.8z" fill="#f2f5fb" stroke="#444c5e" stroke-width="1.100"/></svg><div class="a" style="left:2px;top:297px;width:23px;height:22px;box-sizing:border-box;border:1px solid #000080;background:linear-gradient(100deg,#ffc594,#ffa760 60%,#ff9544)"></div><svg class="a" style="left:5px;top:301px" width="15" height="13" viewBox="0 0 15 13" ><defs><pattern id="hat" width="2.500" height="2.500" patternUnits="userSpaceOnUse" patternTransform="rotate(-45)"><rect width="2.500" height="2.500" fill="#eef2fb"/><rect width="2.500" height="1" fill="#8aa0d0"/></pattern></defs><rect width="15" height="13" fill="url(#hat)"/></svg><span class="t" style="left:9.05px;top:298.00px;font-size:14px;line-height:17px;color:#2a2a2a;font-weight:bold;-webkit-text-stroke:.3px currentColor;font-family:'Liberation Serif';">a</span><span class="t" style="left:6.15px;top:322.00px;font-size:9.5px;line-height:13px;color:#101060;font-weight:bold;-webkit-text-stroke:.3px currentColor;">#</span><svg class="a" style="left:12px;top:328.5px" width="9" height="9" viewBox="0 0 9 9" ><defs><radialGradient id="sph" cx=".35" cy=".3" r=".8"><stop offset="0" stop-color="#fff"/><stop offset=".6" stop-color="#cfd6e2"/><stop offset="1" stop-color="#808a9c"/></radialGradient></defs><circle cx="4.500" cy="4.500" r="4" fill="url(#sph)" stroke="#8a92a2" stroke-width=".6"/></svg><span class="t" style="left:6.15px;top:344.00px;font-size:9.5px;line-height:13px;color:#101060;font-weight:bold;-webkit-text-stroke:.3px currentColor;">#</span><svg class="a" style="left:10px;top:349.5px" width="10" height="10" viewBox="0 0 10 10" ><path d="M2 8.500l6-6.500" stroke="#6072b0" stroke-width="3.600" stroke-linecap="round"/><path d="M2 8.500l6-6.500" stroke="#e6ecfa" stroke-width="1.800" stroke-linecap="round"/></svg><div class="a" style="left:2px;top:363px;width:23px;height:22px;box-sizing:border-box;border:1px solid #000080;background:linear-gradient(100deg,#ffc594,#ffa760 60%,#ff9544)"></div><svg class="a" style="left:5px;top:366px" width="17" height="17" viewBox="0 0 17 17" ><circle cx="4.500" cy="4.500" r="3.700" fill="url(#sph)" stroke="#8a92a2" stroke-width=".6"/><path d="M1.800 14.500l6-6" stroke="#6072b0" stroke-width="3.400" stroke-linecap="round"/><path d="M1.800 14.500l6-6" stroke="#e6ecfa" stroke-width="1.600" stroke-linecap="round"/><path d="M10.500 2.500h6M10.500 5h4.500M10.500 7.500h6M10.500 11h6M10.500 13.500h4.500" stroke="#55586a" stroke-width="1.100"/></svg><div class="a" style="left:2px;top:385px;width:23px;height:22px;box-sizing:border-box;border:1px solid #000080;background:linear-gradient(100deg,#ffc594,#ffa760 60%,#ff9544)"></div><span class="t" style="left:5.82px;top:387.00px;font-size:15px;line-height:18px;color:#3a2414;letter-spacing:-0.433px;transform:scaleX(0.9000);font-weight:bold;-webkit-text-stroke:.3px currentColor;font-family:'Liberation Serif';">ab</span><div class="a" style="left:6px;top:411.500px;width:14px;height:13px;box-sizing:border-box;border:1px solid #222;background:#ff8a7a"></div><svg class="a" style="left:5px;top:433px" width="16" height="14" viewBox="0 0 16 14" ><path d="M1 0v12.500h15" fill="none" stroke="#555e78" stroke-width="1.100"/><path d="M2.500 10l4.500-5.500 4 4 4-6" fill="none" stroke="#d8304a" stroke-width="1.100" stroke-dasharray="1.600 1.200"/><path d="M3 11.500l5-4.500 3.500 3 3.500-5.500" fill="none" stroke="#3c5ccc" stroke-width="1" stroke-dasharray="1.600 1.200"/></svg><div class="a" style="left:1px;top:452px;width:25px;height:12px;border-radius:0 0 4px 4px;background:linear-gradient(90deg,#7797e2,#3a5fc0 55%,#0e3194)"></div><svg class="a" style="left:17px;top:455px" width="7" height="7" viewBox="0 0 7 7" ><rect x="0" y="0" width="1" height="6" fill="#fff"/><path d="M2.500 0v6l3.500-3z" fill="#fff"/><path d="M3.500 2v3.500" stroke="#000" stroke-width=".6" opacity=".4"/></svg>
<div class="a" style="left:27px;top:100px;width:949px;height:571px;background:#fff;overflow:hidden"><svg class="a" style="left:0;top:0" width="949" height="571" viewBox="27 100 949 571"><g shape-rendering="crispEdges"><rect x="222" y="100" width="2" height="42" fill="#000"/><rect x="222" y="170" width="2" height="62" fill="#000"/><rect x="306" y="114" width="2" height="174" fill="#000"/><rect x="614" y="100" width="2" height="46" fill="#000"/><rect x="614" y="166" width="2" height="64" fill="#000"/><rect x="614" y="250" width="2" height="372" fill="#000"/><rect x="623" y="155" width="66" height="2" fill="#000"/><rect x="709" y="155" width="60" height="2" fill="#000"/><rect x="797" y="155" width="83" height="2" fill="#000"/><rect x="913" y="155" width="62" height="2" fill="#000"/><rect x="65" y="239" width="60" height="2" fill="#000"/><rect x="153" y="239" width="56" height="2" fill="#000"/><rect x="237" y="239" width="224" height="2" fill="#000"/><rect x="489" y="239" width="118" height="2" fill="#000"/><rect x="153" y="295" width="140" height="2" fill="#000"/><rect x="321" y="295" width="84" height="2" fill="#000"/><rect x="433" y="295" width="60" height="2" fill="#000"/><rect x="54" y="250" width="2" height="372" fill="#000"/><rect x="138" y="310" width="2" height="172" fill="#000"/><rect x="138" y="502" width="2" height="122" fill="#000"/><rect x="502" y="306" width="2" height="88" fill="#000"/><rect x="502" y="422" width="2" height="60" fill="#000"/><rect x="502" y="502" width="2" height="122" fill="#000"/><rect x="65" y="631" width="64" height="2" fill="#000"/><rect x="149" y="631" width="108" height="2" fill="#000"/><rect x="301" y="631" width="192" height="2" fill="#000"/><rect x="513" y="631" width="92" height="2" fill="#000"/></g><path d="M214 149.3H222L230 153.3H232.8" fill="none" stroke="#000" stroke-width="1"/><path d="M213 163.4H220L228 159.4H232.8" fill="none" stroke="#000" stroke-width="1"/><path d="M297 107.3H304L312 103.3H316.8" fill="none" stroke="#000" stroke-width="1"/><path d="M494 401.3H502L510 405.3H512.8" fill="none" stroke="#000" stroke-width="1"/><path d="M493 415.4H500L508 411.4H512.8" fill="none" stroke="#000" stroke-width="1"/><path d="M130 233.3H137.5L145 237.5H148.5" fill="none" stroke="#000" stroke-width="1"/><path d="M129 247.4H137L144 243.2H148.5" fill="none" stroke="#000" stroke-width="1"/><path d="M130 289.3H137.5L145 293.5H148.5" fill="none" stroke="#000" stroke-width="1"/><path d="M129 303.4H137L144 299.2H148.5" fill="none" stroke="#000" stroke-width="1"/><path d="M49.5 246.5V238Q49.5 234.5 53 234.5H60.5V240.5H57Q54.5 240.5 54.5 243V246.5Z" fill="#808080" stroke="#0a0a0a" stroke-width="1.100" stroke-linejoin="round"/><path d="M693.5 162.7V154.2Q693.5 150.7 697 150.7H704.5V156.7H701Q698.5 156.7 698.5 159.2V162.7Z" fill="#808080" stroke="#0a0a0a" stroke-width="1.100" stroke-linejoin="round"/><path d="M497.5 302.7V294.2Q497.5 290.7 501 290.7H508.5V296.7H505Q502.5 296.7 502.5 299.2V302.7Z" fill="#808080" stroke="#0a0a0a" stroke-width="1.100" stroke-linejoin="round"/><path d="M133.5 498.9V490.4Q133.5 486.9 137 486.9H144.5V492.9H141Q138.5 492.9 138.5 495.4V498.9Z" fill="#808080" stroke="#0a0a0a" stroke-width="1.100" stroke-linejoin="round"/><path d="M497.5 498.9V490.4Q497.5 486.9 501 486.9H508.5V492.9H505Q502.5 492.9 502.5 495.4V498.9Z" fill="#808080" stroke="#0a0a0a" stroke-width="1.100" stroke-linejoin="round"/><path d="M49.5 638.7V630.2Q49.5 626.7 53 626.7H60.5V632.7H57Q54.5 632.7 54.5 635.2V638.7Z" fill="#808080" stroke="#0a0a0a" stroke-width="1.100" stroke-linejoin="round"/><path d="M609.5 638.8V630.3Q609.5 626.8 613 626.8H620.5V632.8H617Q614.5 632.8 614.5 635.3V638.8Z" fill="#808080" stroke="#0a0a0a" stroke-width="1.100" stroke-linejoin="round"/><path d="M609.5 151.5H619.5V155.5H617.5V160H612.5V155.5H609.5Z" fill="#808080" stroke="#0a0a0a" stroke-width="1.100"/><path d="M609.5 235.5H619.5V239.5H617.5V244H612.5V239.5H609.5Z" fill="#808080" stroke="#0a0a0a" stroke-width="1.100"/><path d="M133.5 627.5H143.5V631.5H141.5V636H136.5V631.5H133.5Z" fill="#808080" stroke="#0a0a0a" stroke-width="1.100"/><path d="M497.5 627.5H507.5V631.5H505.5V636H500.5V631.5H497.5Z" fill="#808080" stroke="#0a0a0a" stroke-width="1.100"/><path d="M216.5 231.5H228.5V233.5H226V237.5H229.5V235.5H232.5V245.5H229.5V243.5H216.5V245.5H213.5V235.5H216.5V237.5H219.5V233.5H216.5Z" fill="#fff" stroke="#000" stroke-width="1.100" stroke-linejoin="miter" shape-rendering="crispEdges"/><path d="M222.8 233.5v7M216.7 240.5h11.600" stroke="#5a2a08" stroke-width="3.100" fill="none"/><path d="M222.8 233.8v7M217.1 240.5h10.800" stroke="#e09a58" stroke-width="1.400" fill="none"/><path d="M300.5 287.5H312.5V289.5H310V293.5H313.5V291.5H316.5V301.5H313.5V299.5H300.5V301.5H297.5V291.5H300.5V293.5H303.5V289.5H300.5Z" fill="#fff" stroke="#000" stroke-width="1.100" stroke-linejoin="miter" shape-rendering="crispEdges"/><path d="M306.8 289.5v7M300.7 296.5h11.600" stroke="#5a2a08" stroke-width="3.100" fill="none"/><path d="M306.8 289.8v7M301.1 296.5h10.800" stroke="#e09a58" stroke-width="1.400" fill="none"/><polygon points="220.8,185.6 221,180.87 222,180.268 222.5,177 224.1,177 224.6,180.268 225.6,180.87 225.8,185.6" fill="#3aeaf6" stroke="#04181c" stroke-width=".8" stroke-linejoin="round"/><rect x="220" y="185.6" width="7" height="1.4" fill="#000"/><polygon points="304.8,129.6 305,124.87 306,124.268 306.5,121 308.1,121 308.6,124.268 309.6,124.87 309.8,129.6" fill="#3aeaf6" stroke="#04181c" stroke-width=".8" stroke-linejoin="round"/><rect x="304" y="129.6" width="7" height="1.4" fill="#000"/><polygon points="52.8,265.6 53,260.87 54,260.268 54.5,257 56.1,257 56.6,260.268 57.6,260.87 57.8,265.6" fill="#3aeaf6" stroke="#04181c" stroke-width=".8" stroke-linejoin="round"/><rect x="52" y="265.6" width="7" height="1.4" fill="#000"/><polygon points="136.8,326.6 137,321.32 138,320.648 138.5,317 140.1,317 140.6,320.648 141.6,321.32 141.8,326.6" fill="#3aeaf6" stroke="#04181c" stroke-width=".8" stroke-linejoin="round"/><rect x="136" y="326.6" width="7" height="1.4" fill="#000"/><polygon points="136.8,517.6 137,512.87 138,512.268 138.5,509 140.1,509 140.6,512.268 141.6,512.87 141.8,517.6" fill="#3aeaf6" stroke="#04181c" stroke-width=".8" stroke-linejoin="round"/><rect x="136" y="517.6" width="7" height="1.4" fill="#000"/><polygon points="500.8,322.6 501,317.32 502,316.648 502.5,313 504.1,313 504.6,316.648 505.6,317.32 505.8,322.6" fill="#3aeaf6" stroke="#04181c" stroke-width=".8" stroke-linejoin="round"/><rect x="500" y="322.6" width="7" height="1.4" fill="#000"/><polygon points="500.8,438.6 501,433.32 502,432.648 502.5,429 504.1,429 504.6,432.648 505.6,433.32 505.8,438.6" fill="#3aeaf6" stroke="#04181c" stroke-width=".8" stroke-linejoin="round"/><rect x="500" y="438.6" width="7" height="1.4" fill="#000"/><polygon points="500.8,517.6 501,512.87 502,512.268 502.5,509 504.1,509 504.6,512.268 505.6,512.87 505.8,517.6" fill="#3aeaf6" stroke="#04181c" stroke-width=".8" stroke-linejoin="round"/><rect x="500" y="517.6" width="7" height="1.4" fill="#000"/><polygon points="612.8,131.4 613,136.13 614,136.732 614.5,140 616.1,140 616.6,136.732 617.6,136.13 617.8,131.4" fill="#3aeaf6" stroke="#04181c" stroke-width=".8" stroke-linejoin="round"/><rect x="612" y="130" width="7" height="1.4" fill="#000"/><polygon points="612.8,215.4 613,220.13 614,220.732 614.5,224 616.1,224 616.6,220.732 617.6,220.13 617.8,215.4" fill="#3aeaf6" stroke="#04181c" stroke-width=".8" stroke-linejoin="round"/><rect x="612" y="214" width="7" height="1.4" fill="#000"/><polygon points="612.8,607.4 613,612.13 614,612.732 614.5,616 616.1,616 616.6,612.732 617.6,612.13 617.8,607.4" fill="#3aeaf6" stroke="#04181c" stroke-width=".8" stroke-linejoin="round"/><rect x="612" y="606" width="7" height="1.4" fill="#000"/><polygon points="110.4,237.8 115.13,238 115.732,239 119,239.5 119,241.1 115.732,241.6 115.13,242.6 110.4,242.8" fill="#3aeaf6" stroke="#04181c" stroke-width=".8" stroke-linejoin="round"/><rect x="109" y="237" width="1.4" height="7" fill="#000"/><polygon points="194.4,237.8 199.13,238 199.732,239 203,239.5 203,241.1 199.732,241.6 199.13,242.6 194.4,242.8" fill="#3aeaf6" stroke="#04181c" stroke-width=".8" stroke-linejoin="round"/><rect x="193" y="237" width="1.4" height="7" fill="#000"/><polygon points="278.4,293.8 283.13,294 283.732,295 287,295.5 287,297.1 283.732,297.6 283.13,298.6 278.4,298.8" fill="#3aeaf6" stroke="#04181c" stroke-width=".8" stroke-linejoin="round"/><rect x="277" y="293" width="1.4" height="7" fill="#000"/><polygon points="253.6,237.8 248.32,238 247.648,239 244,239.5 244,241.1 247.648,241.6 248.32,242.6 253.6,242.8" fill="#3aeaf6" stroke="#04181c" stroke-width=".8" stroke-linejoin="round"/><rect x="253.6" y="237" width="1.4" height="7" fill="#000"/><polygon points="504.6,237.8 499.87,238 499.268,239 496,239.5 496,241.1 499.268,241.6 499.87,242.6 504.6,242.8" fill="#3aeaf6" stroke="#04181c" stroke-width=".8" stroke-linejoin="round"/><rect x="504.6" y="237" width="1.4" height="7" fill="#000"/><polygon points="337.6,293.8 332.32,294 331.648,295 328,295.5 328,297.1 331.648,297.6 332.32,298.6 337.6,298.8" fill="#3aeaf6" stroke="#04181c" stroke-width=".8" stroke-linejoin="round"/><rect x="337.6" y="293" width="1.4" height="7" fill="#000"/><polygon points="449.6,293.8 444.32,294 443.648,295 440,295.5 440,297.1 443.648,297.6 444.32,298.6 449.6,298.8" fill="#3aeaf6" stroke="#04181c" stroke-width=".8" stroke-linejoin="round"/><rect x="449.6" y="293" width="1.4" height="7" fill="#000"/><polygon points="81.6,629.8 76.32,630 75.648,631 72,631.5 72,633.1 75.648,633.6 76.32,634.6 81.6,634.8" fill="#3aeaf6" stroke="#04181c" stroke-width=".8" stroke-linejoin="round"/><rect x="81.6" y="629" width="1.4" height="7" fill="#000"/><polygon points="165.6,629.8 160.32,630 159.648,631 156,631.5 156,633.1 159.648,633.6 160.32,634.6 165.6,634.8" fill="#3aeaf6" stroke="#04181c" stroke-width=".8" stroke-linejoin="round"/><rect x="165.6" y="629" width="1.4" height="7" fill="#000"/><polygon points="317.6,629.8 312.32,630 311.648,631 308,631.5 308,633.1 311.648,633.6 312.32,634.6 317.6,634.8" fill="#3aeaf6" stroke="#04181c" stroke-width=".8" stroke-linejoin="round"/><rect x="317.6" y="629" width="1.4" height="7" fill="#000"/><polygon points="529.6,629.8 524.32,630 523.648,631 520,631.5 520,633.1 523.648,633.6 524.32,634.6 529.6,634.8" fill="#3aeaf6" stroke="#04181c" stroke-width=".8" stroke-linejoin="round"/><rect x="529.6" y="629" width="1.4" height="7" fill="#000"/><rect x="259.500" y="620.500" width="39" height="23" fill="#c5f7fc" stroke="#8aa2b4" stroke-width="1"/><rect x="262.400" y="625" width="33.600" height="12.800" rx="5" ry="5.500" fill="#d3eaee" stroke="#111" stroke-width="1.100"/><rect x="266.400" y="625" width="25.100" height="12.800" fill="#fff"/><path d="M266.400 623.300V638.900M291.500 623.300V638.900" stroke="#111" stroke-width="1.200"/><path d="M266.400 625H291.500M266.400 627.300H291.500M266.400 630.300H291.500M266.400 632.600H291.500M266.400 635.200H291.500M266.400 637.700H291.500" stroke="#111" stroke-width="1"/><rect x="879.600" y="140.600" width="30.900" height="30.800" fill="#dcdcdc" stroke="#000" stroke-width="1.200"/><path d="M886.300 166h14.800v-1.500l-1.500-2h-11.800l-1.500 2z" fill="#1f5fa6" stroke="#123c70" stroke-width=".7"/><circle cx="894" cy="155.900" r="7.800" fill="#10d8e2" stroke="#06282c" stroke-width="1"/><path d="M890 149.200Q892 148.300 894.500 148.300H904.500" fill="none" stroke="#000" stroke-width="1.200"/><circle cx="905.200" cy="148.400" r="1.500" fill="#000"/><path d="M880 156H892.500" stroke="#000" stroke-width="1.500"/><path d="M894.500 156l-3-2.100v4.200z" fill="#000"/><circle cx="475.1" cy="240.4" r="9.150" fill="#fcf9c9" stroke="#1a1a1a" stroke-width="1"/><text x="469.4" y="242.8" font-size="10" fill="#222" font-family="Liberation Sans">K</text><text x="476.4" y="245.8" font-size="8.500" fill="#222" font-family="Liberation Sans">v</text><circle cx="419.3" cy="296.4" r="9.150" fill="#fcf9c9" stroke="#1a1a1a" stroke-width="1"/><text x="413.6" y="298.8" font-size="10" fill="#222" font-family="Liberation Sans">K</text><text x="420.6" y="301.8" font-size="8.500" fill="#222" font-family="Liberation Sans">v</text><circle cx="783.1" cy="156.4" r="9.150" fill="#fcf9c9" stroke="#1a1a1a" stroke-width="1"/><text x="777.4" y="158.8" font-size="10" fill="#222" font-family="Liberation Sans">K</text><text x="784.4" y="161.8" font-size="8.500" fill="#222" font-family="Liberation Sans">v</text><circle cx="223" cy="143.9" r="2.450" fill="#fff" stroke="#000" stroke-width="1"/><circle cx="223" cy="167.9" r="2.450" fill="#fff" stroke="#000" stroke-width="1"/><circle cx="307" cy="111.8" r="2.450" fill="#fff" stroke="#000" stroke-width="1"/><circle cx="615" cy="147.7" r="2.450" fill="#fff" stroke="#000" stroke-width="1"/><circle cx="615" cy="163.9" r="2.450" fill="#fff" stroke="#000" stroke-width="1"/><circle cx="615" cy="231.8" r="2.450" fill="#fff" stroke="#000" stroke-width="1"/><circle cx="615" cy="247.9" r="2.450" fill="#fff" stroke="#000" stroke-width="1"/><circle cx="615" cy="624" r="2.450" fill="#fff" stroke="#000" stroke-width="1"/><circle cx="690.9" cy="156" r="2.450" fill="#fff" stroke="#000" stroke-width="1"/><circle cx="707" cy="156" r="2.450" fill="#fff" stroke="#000" stroke-width="1"/><circle cx="771" cy="156" r="2.450" fill="#fff" stroke="#000" stroke-width="1"/><circle cx="795" cy="156" r="2.450" fill="#fff" stroke="#000" stroke-width="1"/><circle cx="910.8" cy="156" r="2.450" fill="#fff" stroke="#000" stroke-width="1"/><circle cx="62.8" cy="240" r="2.450" fill="#fff" stroke="#000" stroke-width="1"/><circle cx="54.8" cy="247.8" r="2.450" fill="#fff" stroke="#000" stroke-width="1"/><circle cx="127.1" cy="240" r="2.450" fill="#fff" stroke="#000" stroke-width="1"/><circle cx="150.7" cy="240" r="2.450" fill="#fff" stroke="#000" stroke-width="1"/><circle cx="210.8" cy="240" r="2.450" fill="#fff" stroke="#000" stroke-width="1"/><circle cx="235.3" cy="240" r="2.450" fill="#fff" stroke="#000" stroke-width="1"/><circle cx="463" cy="240" r="2.450" fill="#fff" stroke="#000" stroke-width="1"/><circle cx="486.9" cy="240" r="2.450" fill="#fff" stroke="#000" stroke-width="1"/><circle cx="150.8" cy="296" r="2.450" fill="#fff" stroke="#000" stroke-width="1"/><circle cx="139" cy="308" r="2.450" fill="#fff" stroke="#000" stroke-width="1"/><circle cx="294.9" cy="296" r="2.450" fill="#fff" stroke="#000" stroke-width="1"/><circle cx="319.1" cy="296" r="2.450" fill="#fff" stroke="#000" stroke-width="1"/><circle cx="407.1" cy="296" r="2.450" fill="#fff" stroke="#000" stroke-width="1"/><circle cx="431.1" cy="296" r="2.450" fill="#fff" stroke="#000" stroke-width="1"/><circle cx="495" cy="296" r="2.450" fill="#fff" stroke="#000" stroke-width="1"/><circle cx="503" cy="304" r="2.450" fill="#fff" stroke="#000" stroke-width="1"/><circle cx="503" cy="395.9" r="2.450" fill="#fff" stroke="#000" stroke-width="1"/><circle cx="503" cy="420" r="2.450" fill="#fff" stroke="#000" stroke-width="1"/><circle cx="503" cy="483.5" r="2.450" fill="#fff" stroke="#000" stroke-width="1"/><circle cx="503" cy="499.7" r="2.450" fill="#fff" stroke="#000" stroke-width="1"/><circle cx="139" cy="483.5" r="2.450" fill="#fff" stroke="#000" stroke-width="1"/><circle cx="139" cy="499.7" r="2.450" fill="#fff" stroke="#000" stroke-width="1"/><circle cx="54.7" cy="623.6" r="2.450" fill="#fff" stroke="#000" stroke-width="1"/><circle cx="63" cy="632" r="2.450" fill="#fff" stroke="#000" stroke-width="1"/><circle cx="131.2" cy="632" r="2.450" fill="#fff" stroke="#000" stroke-width="1"/><circle cx="147" cy="632" r="2.450" fill="#fff" stroke="#000" stroke-width="1"/><circle cx="259" cy="632" r="2.450" fill="#fff" stroke="#000" stroke-width="1"/><circle cx="299.2" cy="632" r="2.450" fill="#fff" stroke="#000" stroke-width="1"/><circle cx="494.9" cy="632" r="2.450" fill="#fff" stroke="#000" stroke-width="1"/><circle cx="511" cy="632" r="2.450" fill="#fff" stroke="#000" stroke-width="1"/><circle cx="607" cy="632" r="2.450" fill="#fff" stroke="#000" stroke-width="1"/><circle cx="223" cy="228" r="2.450" fill="#e81414" stroke="#5a0000" stroke-width=".9"/><circle cx="307" cy="284" r="2.450" fill="#e81414" stroke="#5a0000" stroke-width=".9"/><circle cx="623" cy="156" r="2.450" fill="#e81414" stroke="#5a0000" stroke-width=".9"/><circle cx="606.9" cy="240" r="2.450" fill="#e81414" stroke="#5a0000" stroke-width=".9"/><circle cx="879.5" cy="156" r="2.450" fill="#e81414" stroke="#5a0000" stroke-width=".9"/><circle cx="139" cy="623.6" r="2.450" fill="#e81414" stroke="#5a0000" stroke-width=".9"/><circle cx="503" cy="624" r="2.450" fill="#e81414" stroke="#5a0000" stroke-width=".9"/></svg></div><span class="t" style="left:210.56px;top:213.00px;font-size:9.9px;line-height:13px;color:#0c0c0c;letter-spacing:0.206px;transform:scaleX(1.1328);text-rendering:geometricPrecision;">XXGDG5003VHC</span><span class="t" style="left:462.67px;top:213.00px;font-size:9.9px;line-height:13px;color:#0c0c0c;letter-spacing:0.203px;transform:scaleX(1.1308);text-rendering:geometricPrecision;">XXGDG5003VHC</span><span class="t" style="left:294.67px;top:269.00px;font-size:9.9px;line-height:13px;color:#0c0c0c;letter-spacing:0.203px;transform:scaleX(1.1308);text-rendering:geometricPrecision;">XXGDG5001VHC</span><span class="t" style="left:406.36px;top:269.00px;font-size:9.9px;line-height:13px;color:#0c0c0c;letter-spacing:0.206px;transform:scaleX(1.1328);text-rendering:geometricPrecision;">XXGDG5001VHC</span><span class="t" style="left:770.64px;top:129.00px;font-size:9.9px;line-height:13px;color:#0c0c0c;letter-spacing:0.229px;transform:scaleX(1.1647);text-rendering:geometricPrecision;">01GDG5013VH-</span><span class="t" style="left:878.47px;top:125.00px;font-size:9.9px;line-height:13px;color:#0c0c0c;letter-spacing:0.189px;transform:scaleX(1.1266);text-rendering:geometricPrecision;">XXGDG0003PO-</span><span class="t" style="left:258.47px;top:605.00px;font-size:9.9px;line-height:13px;color:#0c0c0c;letter-spacing:0.181px;transform:scaleX(1.1230);text-rendering:geometricPrecision;">XXGDG0001EX-</span><div class="a" style="left:879px;top:176px;width:97px;height:16px;box-sizing:border-box;border:1px solid #b9b9a4;border-right:0;background:#ffffe1"></div><div class="a" style="left:918px;top:176px;width:1px;height:16px;background:#b9b9a4"></div><span class="t" style="left:881.77px;top:178.00px;font-size:10.2px;line-height:13px;color:#111;letter-spacing:0.150px;transform:scaleX(1.1221);text-rendering:geometricPrecision;">Status</span><div class="a" style="left:919px;top:177px;width:57px;height:14px;overflow:hidden"><span class="t" style="left:2.19px;top:1.00px;font-size:10.2px;line-height:13px;color:#111;letter-spacing:0.096px;transform:scaleX(1.0880);text-rendering:geometricPrecision;">Off or Clos</span></div><span class="t" style="left:663.51px;top:385.00px;font-size:16.5px;line-height:20px;color:#00007c;letter-spacing:0.078px;transform:scaleX(1.0564);font-weight:bold;-webkit-text-stroke:.3px currentColor;">Lube oil engine cooling</span><span class="t" style="left:663.49px;top:403.00px;font-size:16.5px;line-height:20px;color:#00007c;letter-spacing:0.130px;transform:scaleX(1.0850);font-weight:bold;-webkit-text-stroke:.3px currentColor;">system from sump.</span><span class="t" style="left:663.48px;top:421.00px;font-size:16.5px;line-height:20px;color:#00007c;letter-spacing:0.145px;transform:scaleX(1.1146);font-weight:bold;-webkit-text-stroke:.3px currentColor;">Determining total flow at</span><span class="t" style="left:663.49px;top:439.00px;font-size:16.5px;line-height:20px;color:#00007c;letter-spacing:0.130px;transform:scaleX(1.0951);font-weight:bold;-webkit-text-stroke:.3px currentColor;">exact required supply</span><span class="t" style="left:663.45px;top:457.00px;font-size:16.5px;line-height:20px;color:#00007c;letter-spacing:0.206px;transform:scaleX(1.1495);font-weight:bold;-webkit-text-stroke:.3px currentColor;">temperature.</span>
<div class="a" style="left:976px;top:100px;width:16px;height:571px;background:#f0f0f0"></div><svg class="a" style="left:981px;top:107px" width="7" height="4"><path d="M0 4l3.500-3.700 3.500 3.700z" fill="#484848"/></svg><svg class="a" style="left:981px;top:660px" width="7" height="4"><path d="M0 0l3.500 3.700 3.500-3.700z" fill="#484848"/></svg><div class="a" style="left:977px;top:169px;width:14px;height:47px;box-sizing:border-box;border:1px solid #a9a9a9;border-radius:2px;background:linear-gradient(90deg,#f4f4f4,#e3e3e3 50%,#d2d2d2)"></div><svg class="a" style="left:980px;top:188px" width="8" height="9" shape-rendering="crispEdges"><path d="M0 .5h8M0 3.500h8M0 6.500h8" stroke="#5e5e5e"/><path d="M0 1.500h8M0 4.500h8M0 7.500h8" stroke="#fff"/></svg><div class="a" style="left:27px;top:671px;width:965px;height:16px;background:#f0f0f0"></div><svg class="a" style="left:33px;top:675px" width="4" height="7"><path d="M4 0l-3.700 3.500 3.700 3.500z" fill="#484848"/></svg><svg class="a" style="left:965px;top:675px" width="4" height="7"><path d="M0 0l3.700 3.500-3.700 3.500z" fill="#484848"/></svg><div class="a" style="left:45px;top:672px;width:70px;height:14px;box-sizing:border-box;border:1px solid #a9a9a9;border-radius:2px;background:linear-gradient(#f4f4f4,#e3e3e3 50%,#d2d2d2)"></div><svg class="a" style="left:76px;top:675px" width="9" height="8" shape-rendering="crispEdges"><path d="M.5 0v8M3.500 0v8M6.500 0v8" stroke="#5e5e5e"/><path d="M1.500 0v8M4.500 0v8M7.500 0v8" stroke="#fff"/></svg>
<div class="a" style="left:992px;top:100px;width:374px;height:587px;background:linear-gradient(#b9cff5,#a5c0ef 12%,#6a90d6 60%,#3a66bc 92%,#3863b8)"></div><div class="a" style="left:995px;top:102px;width:369px;height:582px;background:#fff"></div><div class="a" style="left:994px;top:102px;width:370px;height:18px;background:#2c63c8"></div><span class="t" style="left:997.81px;top:103.00px;font-size:11.7px;line-height:15px;color:#fff;letter-spacing:0.251px;transform:scaleX(1.0565);">Data Palette</span><svg class="a" style="left:1349px;top:106px" width="9" height="10" shape-rendering="crispEdges"><rect x="2.500" y=".5" width="4" height="5" fill="none" stroke="#fff"/><rect x="5" y="1" width="1" height="5" fill="#fff"/><rect x="1" y="6" width="7" height="1" fill="#fff"/><rect x="4" y="7" width="1" height="3" fill="#fff"/></svg><div class="a" style="left:994px;top:120px;width:370px;height:22px;background:#ececec"></div><div class="a" style="left:994px;top:120px;width:370px;height:2px;background:#bdd0f2"></div><svg class="a" style="left:0;top:121.5px" width="1366" height="20.5" viewBox="0 121.5 1366 20.5"><defs><linearGradient id="tg2" x1="0" y1="0" x2="0" y2="1"><stop offset="0" stop-color="#fff"/><stop offset=".5" stop-color="#f6f6f6"/><stop offset="1" stop-color="#e4e4e4"/></linearGradient></defs><path d="M1251.2 141.5V126Q1251.2 123 1254.2 123H1291.5L1308.3 141.5Z" fill="url(#tg2)"/><path d="M1251.2 141.5V126Q1251.2 123 1254.2 123H1291.5L1308.3 141.5" fill="none" stroke="#9a9a9a" stroke-width="1"/><path d="M1216.4 141.5V126Q1216.4 123 1219.4 123H1241L1257.8 141.5Z" fill="url(#tg2)"/><path d="M1216.4 141.5V126Q1216.4 123 1219.4 123H1241L1257.8 141.5" fill="none" stroke="#9a9a9a" stroke-width="1"/><path d="M1168.7 141.5V126Q1168.7 123 1171.7 123H1206L1222.8 141.5Z" fill="url(#tg2)"/><path d="M1168.7 141.5V126Q1168.7 123 1171.7 123H1206L1222.8 141.5" fill="none" stroke="#9a9a9a" stroke-width="1"/><path d="M1065.7 141.5V126Q1065.7 123 1068.7 123H1101.5L1118.3 141.5Z" fill="url(#tg2)"/><path d="M1065.7 141.5V126Q1065.7 123 1068.7 123H1101.5L1118.3 141.5" fill="none" stroke="#9a9a9a" stroke-width="1"/><path d="M994.5 141.5V126Q994.5 123 997.5 123H1055.4L1072.2 141.5Z" fill="url(#tg2)"/><path d="M994.5 141.5V126Q994.5 123 997.5 123H1055.4L1072.2 141.5" fill="none" stroke="#9a9a9a" stroke-width="1"/><path d="M1111.2 141.5V126Q1111.2 123 1114.2 123H1158.4L1175.2 141.5Z" fill="#f4f4f4"/><path d="M1111.2 141.5V126Q1111.2 123 1114.2 123H1158.4L1175.2 141.5" fill="none" stroke="#9a9a9a" stroke-width="1"/><path d="M994 141.5H1111.2M1175.2 141.5H1364" stroke="#8e8e8e" stroke-width="1"/></svg><span class="t" style="left:998.53px;top:125.00px;font-size:11.7px;line-height:15px;color:#111;letter-spacing:0.164px;transform:scaleX(1.0277);">Messages</span><span class="t" style="left:1070.08px;top:125.00px;font-size:11.7px;line-height:15px;color:#111;letter-spacing:0.460px;transform:scaleX(1.1002);">Input</span><span class="t" style="left:1115.93px;top:125.00px;font-size:11.7px;line-height:15px;color:#111;letter-spacing:0.189px;transform:scaleX(1.0382);">Results</span><span class="t" style="left:1173.00px;top:125.00px;font-size:11.7px;line-height:15px;color:#111;letter-spacing:0.417px;transform:scaleX(1.0807);">Chart</span><span class="t" style="left:1220.82px;top:125.00px;font-size:11.7px;line-height:15px;color:#111;letter-spacing:0.228px;transform:scaleX(1.0520);">List</span><span class="t" style="left:1256.03px;top:125.00px;font-size:11.7px;line-height:15px;color:#111;letter-spacing:0.204px;transform:scaleX(1.0324);">Watch</span><div class="a" style="left:995px;top:142px;width:368px;height:6px;background:linear-gradient(#fff,#f2f2f2)"></div><div class="a" style="left:994px;top:142px;width:1px;height:366px;background:#a9b6cc"></div><div class="a" style="left:1163px;top:142px;width:1px;height:6px;background:#dcdcdc"></div><div class="a" style="left:1269px;top:142px;width:1px;height:6px;background:#dcdcdc"></div><div class="a" style="left:1363px;top:142px;width:1px;height:366px;background:#b4b4b4"></div><div class="a" style="left:995px;top:148px;width:168px;height:18px;background:#a6c8f0;border-top:1px solid #d4e4f8;box-sizing:border-box"></div><div class="a" style="left:1163px;top:148px;width:106px;height:18px;background:#fffee6;border-top:1px solid #f6f4e8;box-sizing:border-box"></div><div class="a" style="left:1269px;top:148px;width:94px;height:18px;background:#fffcf0;border-top:1px solid #f4f2ea;border-left:1px solid #f4f2ea;box-sizing:border-box"></div><span class="t" style="left:996.72px;top:149.00px;font-size:11.7px;line-height:15px;color:#0b0b1c;letter-spacing:0.278px;transform:scaleX(1.0524);">User Number</span><span class="t" style="left:1207.62px;top:150.00px;font-size:11.5px;line-height:14px;color:#111;letter-spacing:0.338px;transform:scaleX(1.1999);font-weight:bold;-webkit-text-stroke:.3px currentColor;">40</span><div class="a" style="left:995px;top:166px;width:168px;height:18px;background:#a6c8f0;border-top:1px solid #d4e4f8;box-sizing:border-box"></div><div class="a" style="left:1163px;top:166px;width:200px;height:18px;background:#fffee6;border-top:1px solid #f6f4e8;box-sizing:border-box"></div><span class="t" style="left:996.72px;top:167.00px;font-size:11.7px;line-height:15px;color:#0b0b1c;letter-spacing:0.249px;transform:scaleX(1.0496);">Element Type</span><div class="a" style="left:1164px;top:166px;width:199px;height:18px;overflow:hidden"><span class="t" style="left:4.55px;top:2.00px;font-size:11.5px;line-height:14px;color:#111;letter-spacing:0.141px;transform:scaleX(1.1514);font-weight:bold;-webkit-text-stroke:.3px currentColor;">Shell and Tube Heat Exchanger</span></div><div class="a" style="left:995px;top:184px;width:168px;height:18px;background:#a6c8f0;border-top:1px solid #d4e4f8;box-sizing:border-box"></div><div class="a" style="left:1163px;top:184px;width:106px;height:18px;background:#fffee6;border-top:1px solid #f6f4e8;box-sizing:border-box"></div><div class="a" style="left:1269px;top:184px;width:94px;height:18px;background:#fffcf0;border-top:1px solid #f4f2ea;border-left:1px solid #f4f2ea;box-sizing:border-box"></div><span class="t" style="left:996.74px;top:185.00px;font-size:11.7px;line-height:15px;color:#0b0b1c;letter-spacing:0.134px;transform:scaleX(1.0215);">Flow</span><span class="t" style="left:1197.72px;top:186.00px;font-size:11.5px;line-height:14px;color:#111;letter-spacing:0.203px;transform:scaleX(1.2016);font-weight:bold;-webkit-text-stroke:.3px currentColor;">275.9</span><span class="t" style="left:1270.69px;top:185.00px;font-size:11.7px;line-height:15px;color:#111;letter-spacing:0.603px;transform:scaleX(1.0984);">m3/h</span><div class="a" style="left:995px;top:202px;width:168px;height:18px;background:#a6c8f0;border-top:1px solid #d4e4f8;box-sizing:border-box"></div><div class="a" style="left:1163px;top:202px;width:106px;height:18px;background:#fffee6;border-top:1px solid #f6f4e8;box-sizing:border-box"></div><div class="a" style="left:1269px;top:202px;width:94px;height:18px;background:#fffcf0;border-top:1px solid #f4f2ea;border-left:1px solid #f4f2ea;box-sizing:border-box"></div><span class="t" style="left:996.73px;top:203.00px;font-size:11.7px;line-height:15px;color:#0b0b1c;letter-spacing:0.160px;transform:scaleX(1.0375);">Friction Loss</span><span class="t" style="left:1189.56px;top:204.00px;font-size:11.5px;line-height:14px;color:#111;letter-spacing:0.207px;transform:scaleX(1.2115);font-weight:bold;-webkit-text-stroke:.3px currentColor;">36774.0</span><span class="t" style="left:1270.75px;top:203.00px;font-size:11.7px;line-height:15px;color:#111;letter-spacing:-0.044px;transform:scaleX(0.9959);">Pa</span><div class="a" style="left:995px;top:220px;width:168px;height:18px;background:#a6c8f0;border-top:1px solid #d4e4f8;box-sizing:border-box"></div><div class="a" style="left:1163px;top:220px;width:106px;height:18px;background:#fffee6;border-top:1px solid #f6f4e8;box-sizing:border-box"></div><div class="a" style="left:1269px;top:220px;width:94px;height:18px;background:#fffcf0;border-top:1px solid #f4f2ea;border-left:1px solid #f4f2ea;box-sizing:border-box"></div><span class="t" style="left:996.71px;top:221.00px;font-size:11.7px;line-height:15px;color:#0b0b1c;letter-spacing:0.249px;transform:scaleX(1.0553);">Heat Transferred</span><span class="t" style="left:1193.92px;top:222.00px;font-size:11.5px;line-height:14px;color:#111;letter-spacing:0.194px;transform:scaleX(1.1935);font-weight:bold;-webkit-text-stroke:.3px currentColor;">1855.1</span><span class="t" style="left:1270.72px;top:221.00px;font-size:11.7px;line-height:15px;color:#111;letter-spacing:0.611px;transform:scaleX(1.0503);">kW</span><div class="a" style="left:995px;top:238px;width:168px;height:18px;background:#a6c8f0;border-top:1px solid #d4e4f8;box-sizing:border-box"></div><div class="a" style="left:1163px;top:238px;width:200px;height:18px;background:#fffee6;border-top:1px solid #f6f4e8;box-sizing:border-box"></div><span class="t" style="left:996.72px;top:239.00px;font-size:11.7px;line-height:15px;color:#0b0b1c;letter-spacing:0.195px;transform:scaleX(1.0441);">In Fluid Phase</span><span class="t" style="left:1168.57px;top:240.00px;font-size:11.5px;line-height:14px;color:#111;letter-spacing:0.135px;transform:scaleX(1.1306);font-weight:bold;-webkit-text-stroke:.3px currentColor;">Liquid</span><div class="a" style="left:995px;top:256px;width:168px;height:18px;background:#a6c8f0;border-top:1px solid #d4e4f8;box-sizing:border-box"></div><div class="a" style="left:1163px;top:256px;width:106px;height:18px;background:#fffee6;border-top:1px solid #f6f4e8;box-sizing:border-box"></div><div class="a" style="left:1269px;top:256px;width:94px;height:18px;background:#fffcf0;border-top:1px solid #f4f2ea;border-left:1px solid #f4f2ea;box-sizing:border-box"></div><span class="t" style="left:996.71px;top:257.00px;font-size:11.7px;line-height:15px;color:#0b0b1c;letter-spacing:0.257px;transform:scaleX(1.0594);">In Stagnation Pressure</span><span class="t" style="left:1197.72px;top:258.00px;font-size:11.5px;line-height:14px;color:#111;letter-spacing:0.203px;transform:scaleX(1.2016);font-weight:bold;-webkit-text-stroke:.3px currentColor;">6.372</span><span class="t" style="left:1270.70px;top:257.00px;font-size:11.7px;line-height:15px;color:#111;letter-spacing:0.391px;transform:scaleX(1.0816);">bar g</span><div class="a" style="left:995px;top:274px;width:168px;height:18px;background:#a6c8f0;border-top:1px solid #d4e4f8;box-sizing:border-box"></div><div class="a" style="left:1163px;top:274px;width:106px;height:18px;background:#fffee6;border-top:1px solid #f6f4e8;box-sizing:border-box"></div><div class="a" style="left:1269px;top:274px;width:94px;height:18px;background:#fffcf0;border-top:1px solid #f4f2ea;border-left:1px solid #f4f2ea;box-sizing:border-box"></div><span class="t" style="left:996.71px;top:275.00px;font-size:11.7px;line-height:15px;color:#0b0b1c;letter-spacing:0.253px;transform:scaleX(1.0614);">In Static Pressure</span><span class="t" style="left:1197.72px;top:276.00px;font-size:11.5px;line-height:14px;color:#111;letter-spacing:0.203px;transform:scaleX(1.2016);font-weight:bold;-webkit-text-stroke:.3px currentColor;">6.363</span><span class="t" style="left:1270.70px;top:275.00px;font-size:11.7px;line-height:15px;color:#111;letter-spacing:0.391px;transform:scaleX(1.0816);">bar g</span><div class="a" style="left:995px;top:292px;width:168px;height:18px;background:#a6c8f0;border-top:1px solid #d4e4f8;box-sizing:border-box"></div><div class="a" style="left:1163px;top:292px;width:106px;height:18px;background:#fffee6;border-top:1px solid #f6f4e8;box-sizing:border-box"></div><div class="a" style="left:1269px;top:292px;width:94px;height:18px;background:#fffcf0;border-top:1px solid #f4f2ea;border-left:1px solid #f4f2ea;box-sizing:border-box"></div><span class="t" style="left:996.70px;top:293.00px;font-size:11.7px;line-height:15px;color:#0b0b1c;letter-spacing:0.312px;transform:scaleX(1.0782);">In Velocity</span><span class="t" style="left:1193.92px;top:294.00px;font-size:11.5px;line-height:14px;color:#111;letter-spacing:0.194px;transform:scaleX(1.1935);font-weight:bold;-webkit-text-stroke:.3px currentColor;">1.4390</span><span class="t" style="left:1270.67px;top:293.00px;font-size:11.7px;line-height:15px;color:#111;letter-spacing:0.812px;transform:scaleX(1.1278);">m/s</span><div class="a" style="left:995px;top:310px;width:168px;height:18px;background:#a6c8f0;border-top:1px solid #d4e4f8;box-sizing:border-box"></div><div class="a" style="left:1163px;top:310px;width:106px;height:18px;background:#fffee6;border-top:1px solid #f6f4e8;box-sizing:border-box"></div><div class="a" style="left:1269px;top:310px;width:94px;height:18px;background:#fffcf0;border-top:1px solid #f4f2ea;border-left:1px solid #f4f2ea;box-sizing:border-box"></div><span class="t" style="left:996.70px;top:311.00px;font-size:11.7px;line-height:15px;color:#0b0b1c;letter-spacing:0.311px;transform:scaleX(1.0708);">In Stag. Temperature</span><span class="t" style="left:1201.72px;top:312.00px;font-size:11.5px;line-height:14px;color:#111;letter-spacing:0.205px;transform:scaleX(1.1979);font-weight:bold;-webkit-text-stroke:.3px currentColor;">65.0</span><span class="t" style="left:1270.75px;top:311.00px;font-size:11.7px;line-height:15px;color:#111;">C</span><div class="a" style="left:995px;top:328px;width:168px;height:18px;background:#a6c8f0;border-top:1px solid #d4e4f8;box-sizing:border-box"></div><div class="a" style="left:1163px;top:328px;width:106px;height:18px;background:#fffee6;border-top:1px solid #f6f4e8;box-sizing:border-box"></div><div class="a" style="left:1269px;top:328px;width:94px;height:18px;background:#fffcf0;border-top:1px solid #f4f2ea;border-left:1px solid #f4f2ea;box-sizing:border-box"></div><span class="t" style="left:996.70px;top:329.00px;font-size:11.7px;line-height:15px;color:#0b0b1c;letter-spacing:0.299px;transform:scaleX(1.0703);">In Static Temperature</span><span class="t" style="left:1201.72px;top:330.00px;font-size:11.5px;line-height:14px;color:#111;letter-spacing:0.205px;transform:scaleX(1.1979);font-weight:bold;-webkit-text-stroke:.3px currentColor;">65.0</span><span class="t" style="left:1270.75px;top:329.00px;font-size:11.7px;line-height:15px;color:#111;">C</span><div class="a" style="left:995px;top:346px;width:168px;height:18px;background:#a6c8f0;border-top:1px solid #d4e4f8;box-sizing:border-box"></div><div class="a" style="left:1163px;top:346px;width:106px;height:18px;background:#fffee6;border-top:1px solid #f6f4e8;box-sizing:border-box"></div><div class="a" style="left:1269px;top:346px;width:94px;height:18px;background:#fffcf0;border-top:1px solid #f4f2ea;border-left:1px solid #f4f2ea;box-sizing:border-box"></div><span class="t" style="left:996.70px;top:347.00px;font-size:11.7px;line-height:15px;color:#0b0b1c;letter-spacing:0.348px;transform:scaleX(1.0818);">In Density</span><span class="t" style="left:1193.92px;top:348.00px;font-size:11.5px;line-height:14px;color:#111;letter-spacing:0.194px;transform:scaleX(1.1935);font-weight:bold;-webkit-text-stroke:.3px currentColor;">863.00</span><span class="t" style="left:1270.68px;top:347.00px;font-size:11.7px;line-height:15px;color:#111;letter-spacing:0.579px;transform:scaleX(1.1022);">kg/m3</span><div class="a" style="left:995px;top:364px;width:168px;height:18px;background:#a6c8f0;border-top:1px solid #d4e4f8;box-sizing:border-box"></div><div class="a" style="left:1163px;top:364px;width:200px;height:18px;background:#fffee6;border-top:1px solid #f6f4e8;box-sizing:border-box"></div><span class="t" style="left:996.73px;top:365.00px;font-size:11.7px;line-height:15px;color:#0b0b1c;letter-spacing:0.152px;transform:scaleX(1.0326);">Out Fluid Phase</span><span class="t" style="left:1168.57px;top:366.00px;font-size:11.5px;line-height:14px;color:#111;letter-spacing:0.135px;transform:scaleX(1.1306);font-weight:bold;-webkit-text-stroke:.3px currentColor;">Liquid</span><div class="a" style="left:995px;top:382px;width:168px;height:18px;background:#a6c8f0;border-top:1px solid #d4e4f8;box-sizing:border-box"></div><div class="a" style="left:1163px;top:382px;width:106px;height:18px;background:#fffee6;border-top:1px solid #f6f4e8;box-sizing:border-box"></div><div class="a" style="left:1269px;top:382px;width:94px;height:18px;background:#fffcf0;border-top:1px solid #f4f2ea;border-left:1px solid #f4f2ea;box-sizing:border-box"></div><span class="t" style="left:996.72px;top:383.00px;font-size:11.7px;line-height:15px;color:#0b0b1c;letter-spacing:0.228px;transform:scaleX(1.0508);">Out Stagnation Pressure</span><span class="t" style="left:1197.72px;top:384.00px;font-size:11.5px;line-height:14px;color:#111;letter-spacing:0.203px;transform:scaleX(1.2016);font-weight:bold;-webkit-text-stroke:.3px currentColor;">6.004</span><span class="t" style="left:1270.70px;top:383.00px;font-size:11.7px;line-height:15px;color:#111;letter-spacing:0.391px;transform:scaleX(1.0816);">bar g</span><div class="a" style="left:995px;top:400px;width:168px;height:18px;background:#a6c8f0;border-top:1px solid #d4e4f8;box-sizing:border-box"></div><div class="a" style="left:1163px;top:400px;width:106px;height:18px;background:#fffee6;border-top:1px solid #f6f4e8;box-sizing:border-box"></div><div class="a" style="left:1269px;top:400px;width:94px;height:18px;background:#fffcf0;border-top:1px solid #f4f2ea;border-left:1px solid #f4f2ea;box-sizing:border-box"></div><span class="t" style="left:996.72px;top:401.00px;font-size:11.7px;line-height:15px;color:#0b0b1c;letter-spacing:0.218px;transform:scaleX(1.0503);">Out Static Pressure</span><span class="t" style="left:1197.72px;top:402.00px;font-size:11.5px;line-height:14px;color:#111;letter-spacing:0.203px;transform:scaleX(1.2016);font-weight:bold;-webkit-text-stroke:.3px currentColor;">5.995</span><span class="t" style="left:1270.70px;top:401.00px;font-size:11.7px;line-height:15px;color:#111;letter-spacing:0.391px;transform:scaleX(1.0816);">bar g</span><div class="a" style="left:995px;top:418px;width:168px;height:18px;background:#a6c8f0;border-top:1px solid #d4e4f8;box-sizing:border-box"></div><div class="a" style="left:1163px;top:418px;width:106px;height:18px;background:#fffee6;border-top:1px solid #f6f4e8;box-sizing:border-box"></div><div class="a" style="left:1269px;top:418px;width:94px;height:18px;background:#fffcf0;border-top:1px solid #f4f2ea;border-left:1px solid #f4f2ea;box-sizing:border-box"></div><span class="t" style="left:996.71px;top:419.00px;font-size:11.7px;line-height:15px;color:#0b0b1c;letter-spacing:0.251px;transform:scaleX(1.0578);">Out Velocity</span><span class="t" style="left:1193.92px;top:420.00px;font-size:11.5px;line-height:14px;color:#111;letter-spacing:0.194px;transform:scaleX(1.1935);font-weight:bold;-webkit-text-stroke:.3px currentColor;">1.4211</span><span class="t" style="left:1270.67px;top:419.00px;font-size:11.7px;line-height:15px;color:#111;letter-spacing:0.812px;transform:scaleX(1.1278);">m/s</span><div class="a" style="left:995px;top:436px;width:168px;height:18px;background:#a6c8f0;border-top:1px solid #d4e4f8;box-sizing:border-box"></div><div class="a" style="left:1163px;top:436px;width:106px;height:18px;background:#fffee6;border-top:1px solid #f6f4e8;box-sizing:border-box"></div><div class="a" style="left:1269px;top:436px;width:94px;height:18px;background:#fffcf0;border-top:1px solid #f4f2ea;border-left:1px solid #f4f2ea;box-sizing:border-box"></div><span class="t" style="left:996.71px;top:437.00px;font-size:11.7px;line-height:15px;color:#0b0b1c;letter-spacing:0.275px;transform:scaleX(1.0603);">Out Stag. Temperature</span><span class="t" style="left:1201.72px;top:438.00px;font-size:11.5px;line-height:14px;color:#111;letter-spacing:0.205px;transform:scaleX(1.1979);font-weight:bold;-webkit-text-stroke:.3px currentColor;">48.0</span><span class="t" style="left:1270.75px;top:437.00px;font-size:11.7px;line-height:15px;color:#111;">C</span><div class="a" style="left:995px;top:454px;width:168px;height:18px;background:#a6c8f0;border-top:1px solid #d4e4f8;box-sizing:border-box"></div><div class="a" style="left:1163px;top:454px;width:106px;height:18px;background:#fffee6;border-top:1px solid #f6f4e8;box-sizing:border-box"></div><div class="a" style="left:1269px;top:454px;width:94px;height:18px;background:#fffcf0;border-top:1px solid #f4f2ea;border-left:1px solid #f4f2ea;box-sizing:border-box"></div><span class="t" style="left:996.71px;top:455.00px;font-size:11.7px;line-height:15px;color:#0b0b1c;letter-spacing:0.267px;transform:scaleX(1.0605);">Out Static Temperature</span><span class="t" style="left:1201.72px;top:456.00px;font-size:11.5px;line-height:14px;color:#111;letter-spacing:0.205px;transform:scaleX(1.1979);font-weight:bold;-webkit-text-stroke:.3px currentColor;">48.0</span><span class="t" style="left:1270.75px;top:455.00px;font-size:11.7px;line-height:15px;color:#111;">C</span><div class="a" style="left:995px;top:472px;width:168px;height:18px;background:#a6c8f0;border-top:1px solid #d4e4f8;box-sizing:border-box"></div><div class="a" style="left:1163px;top:472px;width:106px;height:18px;background:#fffee6;border-top:1px solid #f6f4e8;box-sizing:border-box"></div><div class="a" style="left:1269px;top:472px;width:94px;height:18px;background:#fffcf0;border-top:1px solid #f4f2ea;border-left:1px solid #f4f2ea;box-sizing:border-box"></div><span class="t" style="left:996.71px;top:473.00px;font-size:11.7px;line-height:15px;color:#0b0b1c;letter-spacing:0.277px;transform:scaleX(1.0602);">Out Density</span><span class="t" style="left:1193.92px;top:474.00px;font-size:11.5px;line-height:14px;color:#111;letter-spacing:0.194px;transform:scaleX(1.1935);font-weight:bold;-webkit-text-stroke:.3px currentColor;">873.88</span><span class="t" style="left:1270.68px;top:473.00px;font-size:11.7px;line-height:15px;color:#111;letter-spacing:0.579px;transform:scaleX(1.1022);">kg/m3</span><div class="a" style="left:995px;top:490px;width:168px;height:18px;background:#a6c8f0;border-top:1px solid #d4e4f8;box-sizing:border-box"></div><div class="a" style="left:1163px;top:490px;width:106px;height:18px;background:#fffee6;border-top:1px solid #f6f4e8;box-sizing:border-box"></div><div class="a" style="left:1269px;top:490px;width:94px;height:18px;background:#fffcf0;border-top:1px solid #f4f2ea;border-left:1px solid #f4f2ea;box-sizing:border-box"></div><span class="t" style="left:996.72px;top:491.00px;font-size:11.7px;line-height:15px;color:#0b0b1c;letter-spacing:0.238px;transform:scaleX(1.0478);">Composition Mass %</span><span class="t" style="left:1164.57px;top:492.00px;font-size:11.5px;line-height:14px;color:#111;letter-spacing:0.123px;transform:scaleX(1.1250);font-weight:bold;-webkit-text-stroke:.3px currentColor;">SAE 40 Lube Oil</span><span class="t" style="left:1270.71px;top:491.00px;font-size:11.7px;line-height:15px;color:#111;letter-spacing:0.401px;transform:scaleX(1.0683);">100,0%</span>
<div class="a" style="left:0;top:686px;width:1366px;height:22px;background:linear-gradient(#e6effc,#d3e3fb 20%,#a6c2ee)"></div><div class="a" style="left:0;top:707px;width:1366px;height:1px;background:#14264c"></div><div class="a" style="left:1px;top:688px;width:72px;height:18px;box-sizing:border-box;border:1px solid #84a2d6;background:linear-gradient(#dbe8fc,#c6daf8 45%,#9ebcea)"></div><span class="t" style="left:4.01px;top:689.00px;font-size:11.7px;line-height:15px;color:#0a0a1c;letter-spacing:0.285px;transform:scaleX(1.0585);">355, 564</span><div class="a" style="left:75px;top:688px;width:97px;height:18px;box-sizing:border-box;border:1px solid #84a2d6;background:linear-gradient(#dbe8fc,#c6daf8 45%,#9ebcea)"></div><span class="t" style="left:95.34px;top:689.00px;font-size:11.7px;line-height:15px;color:#0a0a1c;letter-spacing:0.087px;transform:scaleX(1.0144);">Snap OFF</span><div class="a" style="left:174px;top:688px;width:102px;height:18px;box-sizing:border-box;border:1px solid #84a2d6;background:linear-gradient(#dbe8fc,#c6daf8 45%,#9ebcea)"></div><span class="t" style="left:184.61px;top:689.00px;font-size:11.7px;line-height:15px;color:#0a0a1c;letter-spacing:0.276px;transform:scaleX(1.0542);">NTP: Duxbury</span><div class="a" style="left:278px;top:688px;width:97px;height:18px;box-sizing:border-box;border:1px solid #84a2d6;background:linear-gradient(#dbe8fc,#c6daf8 45%,#9ebcea)"></div><span class="t" style="left:307.33px;top:689.00px;font-size:11.7px;line-height:15px;color:#0a0a1c;letter-spacing:0.282px;transform:scaleX(1.0316);">WASC</span><div class="a" style="left:377.5px;top:688px;width:61px;height:18px;box-sizing:border-box;border:1px solid #84a2d6;background:linear-gradient(#dbe8fc,#c6daf8 45%,#9ebcea)"></div><span class="t" style="left:390.72px;top:689.00px;font-size:11.7px;line-height:15px;color:#0a0a1c;letter-spacing:0.246px;transform:scaleX(1.0517);">Moller</span><div class="a" style="left:441px;top:688px;width:107.5px;height:18px;box-sizing:border-box;border:1px solid #84a2d6;background:linear-gradient(#dbe8fc,#c6daf8 45%,#9ebcea)"></div><span class="t" style="left:448.91px;top:689.00px;font-size:11.7px;line-height:15px;color:#0a0a1c;letter-spacing:0.266px;transform:scaleX(1.0638);">Whalley Criteria</span><div class="a" style="left:551px;top:688px;width:161.5px;height:18px;box-sizing:border-box;border:1px solid #84a2d6;background:linear-gradient(#dbe8fc,#c6daf8 45%,#9ebcea)"></div><span class="t" style="left:566.82px;top:689.00px;font-size:11.7px;line-height:15px;color:#0a0a1c;letter-spacing:0.184px;transform:scaleX(1.0412);">Recalculation Required</span><div class="a" style="left:715.5px;top:688px;width:649.5px;height:18px;box-sizing:border-box;border:1px solid #84a2d6;background:linear-gradient(#dbe8fc,#c6daf8 45%,#9ebcea)"></div>
</div>
</body></html>
